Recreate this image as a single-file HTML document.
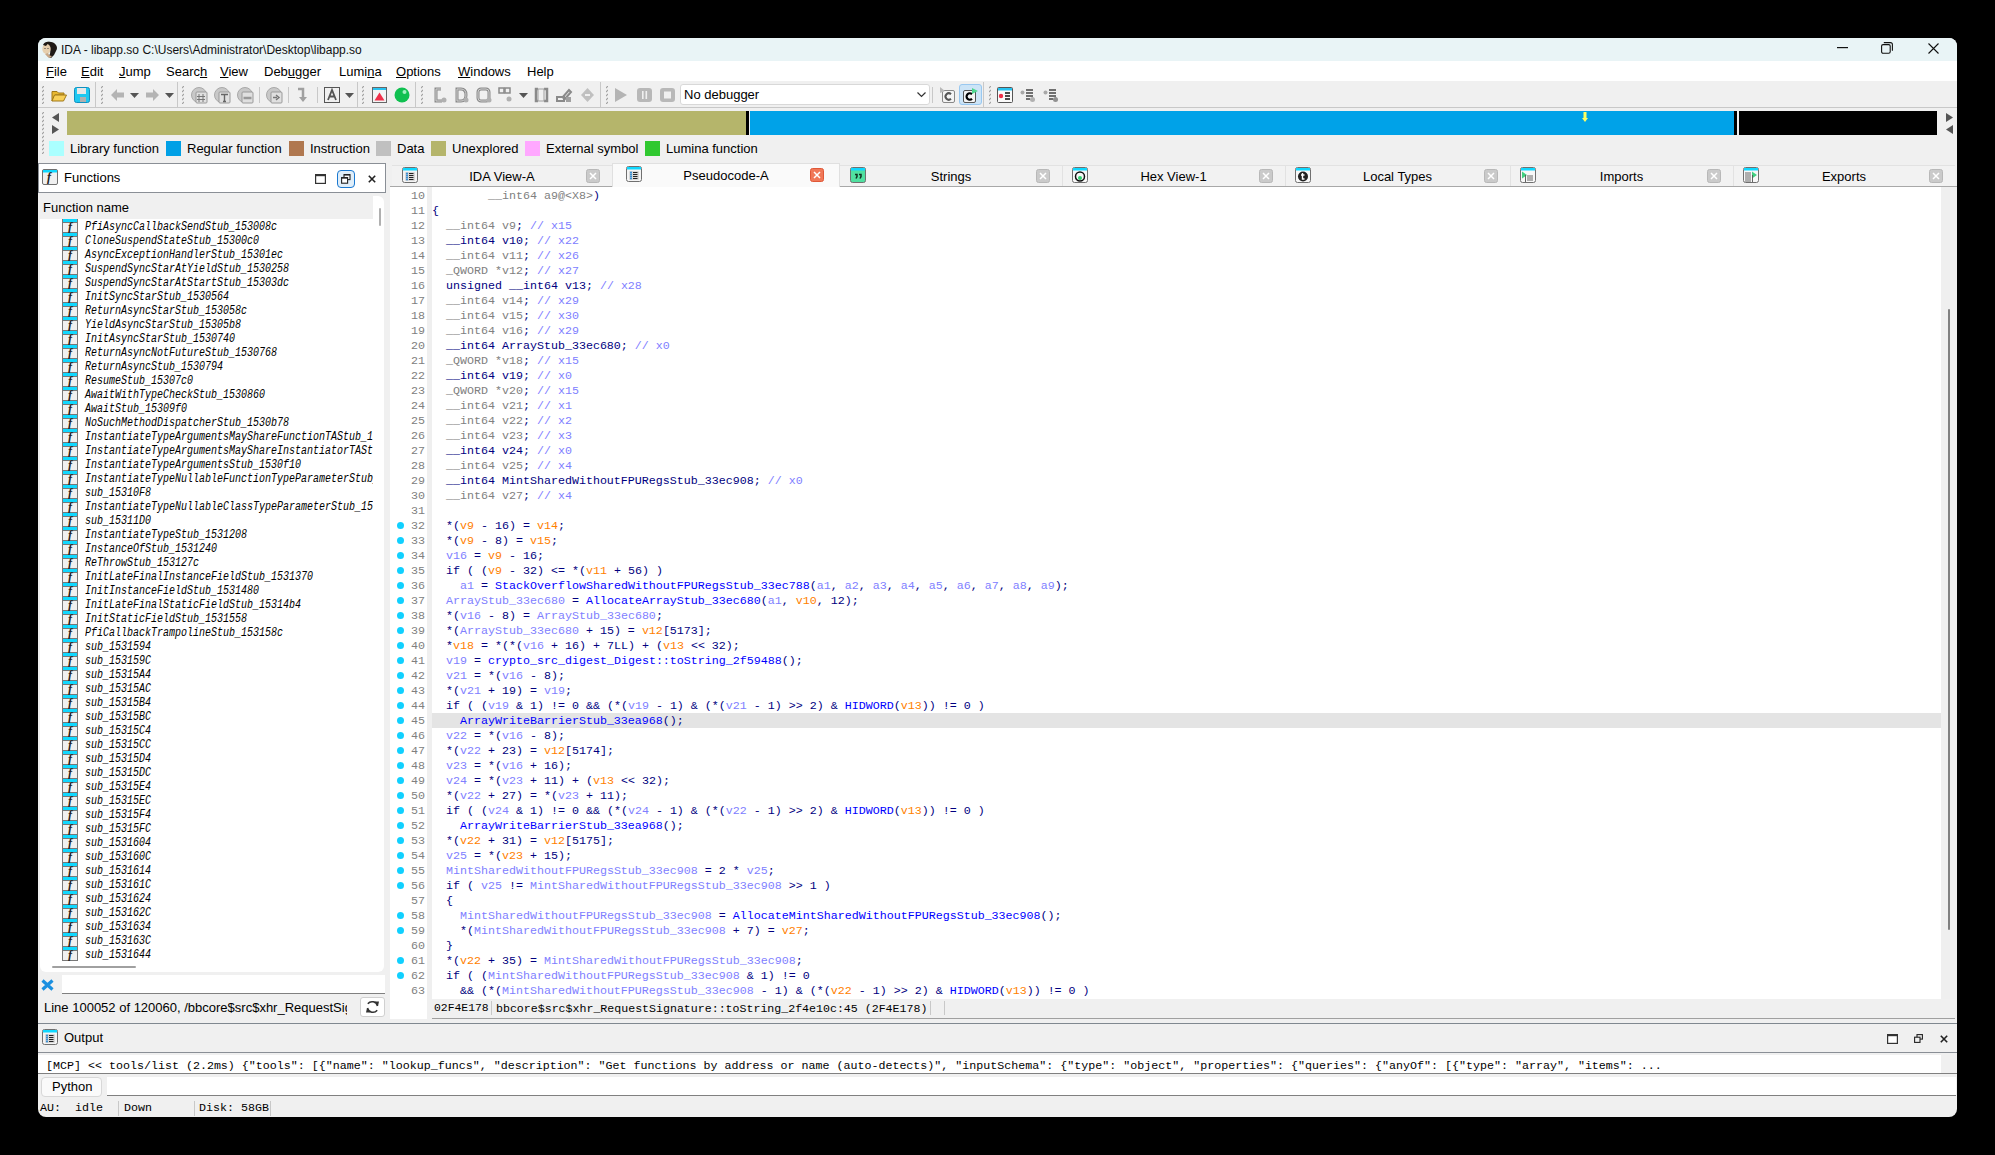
<!DOCTYPE html><html><head><meta charset="utf-8"><style>
*{margin:0;padding:0;box-sizing:border-box}
html,body{width:1995px;height:1155px;background:#000;overflow:hidden;font-family:"Liberation Sans",sans-serif;}
.a{position:absolute}
.win{position:absolute;left:38px;top:38px;width:1919px;height:1079px;background:#f0f0f0;border-radius:8px;overflow:hidden}
.t{position:absolute;white-space:pre;line-height:1}
.mono{font-family:"Liberation Mono",monospace}
i{font-style:normal}.o{color:#ff8000}.p{color:#8080ff}.f{color:#0000ff}.g{color:#808080}.c{color:#8080ff}
.u{text-decoration:underline;text-decoration-thickness:1px;text-underline-offset:1px}
</style></head><body>
<div class="win">
<div class="a" style="left:0px;top:0px;width:1919px;height:23px;background:#e9f4f6"></div>
<svg class="a" style="left:2px;top:3px;" width="18" height="18" viewBox="0 0 18 18"><path d="M7 1q6-1 9 3q2 3 0 6q-1 2-2 4l-3 3l-3-1q3-3 2-7q-1-3-4-3z" fill="#1e1a16"/><ellipse cx="6.5" cy="8" rx="4.2" ry="5" fill="#e6cfae"/><path d="M3 4q2-4 7-3q-3 2-4 4z" fill="#1e1a16"/><path d="M5 13q2 3 5 4l2-2q-3 0-4-3z" fill="#c8a888"/><circle cx="5" cy="7.5" r="0.6" fill="#333"/><circle cx="8" cy="7.5" r="0.6" fill="#333"/></svg>
<svg class="a" style="left:1799px;top:9px;" width="11" height="2" viewBox="0 0 11 2"><rect width="11" height="1.2" fill="#111"/></svg>
<svg class="a" style="left:1843px;top:4px;" width="12" height="12" viewBox="0 0 12 12"><rect x="0.6" y="2.6" width="8.6" height="8.6" rx="1.5" fill="none" stroke="#111" stroke-width="1.1"/><path d="M2.8 0.6H9.4q2 0 2 2V8.8" fill="none" stroke="#111" stroke-width="1.1"/></svg>
<svg class="a" style="left:1890px;top:5px;" width="11" height="11" viewBox="0 0 11 11"><path d="M0.5 0.5L10.5 10.5M10.5 0.5L0.5 10.5" stroke="#111" stroke-width="1.1"/></svg>
<div class="t" style="left:23px;top:6px;font-size:12px;color:#000;color:#111">IDA - libapp.so C:\Users\Administrator\Desktop\libapp.so</div>
<div class="a" style="left:0px;top:23px;width:1919px;height:20px;background:#fff"></div>
<div class="t" style="left:8px;top:27px;font-size:13px;color:#000"><span class="u">F</span>ile</div>
<div class="t" style="left:43px;top:27px;font-size:13px;color:#000"><span class="u">E</span>dit</div>
<div class="t" style="left:81px;top:27px;font-size:13px;color:#000"><span class="u">J</span>ump</div>
<div class="t" style="left:128px;top:27px;font-size:13px;color:#000">Searc<span class="u">h</span></div>
<div class="t" style="left:182px;top:27px;font-size:13px;color:#000"><span class="u">V</span>iew</div>
<div class="t" style="left:226px;top:27px;font-size:13px;color:#000">Deb<span class="u">u</span>gger</div>
<div class="t" style="left:301px;top:27px;font-size:13px;color:#000">Lumi<span class="u">n</span>a</div>
<div class="t" style="left:358px;top:27px;font-size:13px;color:#000"><span class="u">O</span>ptions</div>
<div class="t" style="left:420px;top:27px;font-size:13px;color:#000"><span class="u">W</span>indows</div>
<div class="t" style="left:489px;top:27px;font-size:13px;color:#000">Help</div>
<div class="a" style="left:0px;top:43px;width:1919px;height:26px;background:#f0f0f0"></div>
<div class="a" style="left:0px;top:69px;width:1919px;height:1px;background:#c8c8c8"></div>
<svg class="a" style="left:4px;top:48px;" width="2" height="18" viewBox="0 0 2 18"><path d="M0 2L2 0" stroke="#a0a0a0" stroke-width="1.2"/><path d="M0 6L2 4" stroke="#a0a0a0" stroke-width="1.2"/><path d="M0 10L2 8" stroke="#a0a0a0" stroke-width="1.2"/><path d="M0 14L2 12" stroke="#a0a0a0" stroke-width="1.2"/><path d="M0 18L2 16" stroke="#a0a0a0" stroke-width="1.2"/></svg>
<svg class="a" style="left:13px;top:51px;" width="16" height="13" viewBox="0 0 16 13"><path d="M1 2.5h5l1.5 1.5H13v2H4L1 12Z" fill="#e8b830" stroke="#a07818" stroke-width="1"/><path d="M3.5 6H15.5L12.5 12H1Z" fill="#f8d058" stroke="#a07818" stroke-width="1"/></svg>
<svg class="a" style="left:36px;top:49px;" width="16" height="16" viewBox="0 0 16 16"><rect x="0.5" y="0.5" width="15" height="15" rx="2" fill="#1ec8f0" stroke="#1090c0"/><rect x="3" y="1" width="9" height="6" fill="#e8e8e8"/><rect x="6" y="10" width="6" height="5" fill="#b0b0b0"/></svg>
<div class="a" style="left:57px;top:44px;width:1px;height:25px;background:#c8c8c8"></div>
<svg class="a" style="left:63px;top:48px;" width="2" height="18" viewBox="0 0 2 18"><path d="M0 2L2 0" stroke="#a0a0a0" stroke-width="1.2"/><path d="M0 6L2 4" stroke="#a0a0a0" stroke-width="1.2"/><path d="M0 10L2 8" stroke="#a0a0a0" stroke-width="1.2"/><path d="M0 14L2 12" stroke="#a0a0a0" stroke-width="1.2"/><path d="M0 18L2 16" stroke="#a0a0a0" stroke-width="1.2"/></svg>
<svg class="a" style="left:73px;top:50px;" width="14" height="14" viewBox="0 0 14 14"><path d="M0 7L6 1V4.5H13V9.5H6V13Z" fill="#b4b4b4"/></svg>
<svg class="a" style="left:92px;top:55px;" width="9" height="5" viewBox="0 0 9 5"><path d="M0 0H9L4.5 5Z" fill="#555"/></svg>
<svg class="a" style="left:107px;top:50px;" width="14" height="14" viewBox="0 0 14 14"><path d="M14 7L8 1V4.5H1V9.5H8V13Z" fill="#b4b4b4"/></svg>
<svg class="a" style="left:127px;top:55px;" width="9" height="5" viewBox="0 0 9 5"><path d="M0 0H9L4.5 5Z" fill="#555"/></svg>
<div class="a" style="left:139px;top:44px;width:1px;height:25px;background:#c8c8c8"></div>
<svg class="a" style="left:144px;top:48px;" width="2" height="18" viewBox="0 0 2 18"><path d="M0 2L2 0" stroke="#a0a0a0" stroke-width="1.2"/><path d="M0 6L2 4" stroke="#a0a0a0" stroke-width="1.2"/><path d="M0 10L2 8" stroke="#a0a0a0" stroke-width="1.2"/><path d="M0 14L2 12" stroke="#a0a0a0" stroke-width="1.2"/><path d="M0 18L2 16" stroke="#a0a0a0" stroke-width="1.2"/></svg>
<svg class="a" style="left:153px;top:49px;" width="17" height="17" viewBox="0 0 17 17"><circle cx="8" cy="8" r="7.5" fill="#c8c8c8" stroke="#a8a8a8"/><rect x="5" y="5" width="11" height="11" rx="1" fill="#e0e0e0" stroke="#9a9a9a"/><path d="M8 7v8M12 7v8M6 9.5h8M6 12.5h8" stroke="#777" stroke-width="1"/></svg>
<svg class="a" style="left:176px;top:49px;" width="17" height="17" viewBox="0 0 17 17"><circle cx="8" cy="8" r="7.5" fill="#c8c8c8" stroke="#a8a8a8"/><rect x="5" y="5" width="11" height="11" rx="1" fill="#e0e0e0" stroke="#9a9a9a"/><path d="M7 7.5h7M10.5 7.5v7M9 14.5h3" stroke="#666" stroke-width="1.4"/></svg>
<svg class="a" style="left:199px;top:49px;" width="17" height="17" viewBox="0 0 17 17"><circle cx="8" cy="8" r="7.5" fill="#c8c8c8" stroke="#a8a8a8"/><rect x="5" y="5" width="11" height="11" rx="1" fill="#e0e0e0" stroke="#9a9a9a"/><path d="M6.5 11h8" stroke="#999" stroke-width="2.5"/></svg>
<div class="a" style="left:221px;top:49px;width:1px;height:16px;background:#c8c8c8"></div>
<svg class="a" style="left:228px;top:49px;" width="17" height="17" viewBox="0 0 17 17"><circle cx="8" cy="8" r="7.5" fill="#c8c8c8" stroke="#a8a8a8"/><rect x="5" y="5" width="11" height="11" rx="1" fill="#e0e0e0" stroke="#9a9a9a"/><path d="M7 10.5h4M10 8l3 2.5-3 2.5" stroke="#777" stroke-width="1.4" fill="none"/></svg>
<div class="a" style="left:250px;top:49px;width:1px;height:16px;background:#c8c8c8"></div>
<svg class="a" style="left:259px;top:49px;" width="13" height="17" viewBox="0 0 13 17"><path d="M1 2h5v10" stroke="#a0a0a0" stroke-width="2.5" fill="none"/><path d="M2 10h8l-4 5Z" fill="#a0a0a0"/></svg>
<div class="a" style="left:279px;top:49px;width:1px;height:16px;background:#c8c8c8"></div>
<svg class="a" style="left:286px;top:49px;" width="16" height="16" viewBox="0 0 16 16"><rect x="0.5" y="0.5" width="15" height="15" fill="#f0f0f0" stroke="#555"/><path d="M4 13L8 3L12 13M5.5 9.5h5" stroke="#555" stroke-width="1.8" fill="none"/></svg>
<svg class="a" style="left:307px;top:55px;" width="9" height="5" viewBox="0 0 9 5"><path d="M0 0H9L4.5 5Z" fill="#555"/></svg>
<div class="a" style="left:319px;top:44px;width:1px;height:25px;background:#c8c8c8"></div>
<svg class="a" style="left:324px;top:48px;" width="2" height="18" viewBox="0 0 2 18"><path d="M0 2L2 0" stroke="#a0a0a0" stroke-width="1.2"/><path d="M0 6L2 4" stroke="#a0a0a0" stroke-width="1.2"/><path d="M0 10L2 8" stroke="#a0a0a0" stroke-width="1.2"/><path d="M0 14L2 12" stroke="#a0a0a0" stroke-width="1.2"/><path d="M0 18L2 16" stroke="#a0a0a0" stroke-width="1.2"/></svg>
<svg class="a" style="left:334px;top:49px;" width="15" height="16" viewBox="0 0 15 16"><rect x="0.5" y="0.5" width="14" height="15" fill="#f4f4f4" stroke="#666"/><rect x="1" y="1" width="13" height="2" fill="#29c3f0"/><path d="M2.5 13.5L7.5 5.5L12.5 13.5Z" fill="#f0304a"/></svg>
<svg class="a" style="left:356px;top:49px;" width="16" height="16" viewBox="0 0 16 16"><circle cx="8" cy="8" r="7.5" fill="#10c050"/><circle cx="10.5" cy="5" r="2" fill="#a0f0c0"/></svg>
<div class="a" style="left:377px;top:44px;width:1px;height:25px;background:#c8c8c8"></div>
<svg class="a" style="left:383px;top:48px;" width="2" height="18" viewBox="0 0 2 18"><path d="M0 2L2 0" stroke="#a0a0a0" stroke-width="1.2"/><path d="M0 6L2 4" stroke="#a0a0a0" stroke-width="1.2"/><path d="M0 10L2 8" stroke="#a0a0a0" stroke-width="1.2"/><path d="M0 14L2 12" stroke="#a0a0a0" stroke-width="1.2"/><path d="M0 18L2 16" stroke="#a0a0a0" stroke-width="1.2"/></svg>
<svg class="a" style="left:394px;top:49px;" width="15" height="17" viewBox="0 0 15 17"><path d="M9 2H4v12h6" stroke="#8a8a8a" stroke-width="3" fill="none"/><path d="M9 2H4v12h6" stroke="#d0d0d0" stroke-width="1" fill="none"/><circle cx="12" cy="13" r="2.5" fill="#b0b0b0"/></svg>
<svg class="a" style="left:416px;top:49px;" width="15" height="17" viewBox="0 0 15 17"><path d="M3 2h4q5 0 5 6t-5 6H3Z" stroke="#8a8a8a" stroke-width="3" fill="none"/><path d="M3 2h4q5 0 5 6t-5 6H3Z" stroke="#d0d0d0" stroke-width="1" fill="none"/><circle cx="12" cy="13" r="2.5" fill="#b0b0b0"/></svg>
<svg class="a" style="left:438px;top:49px;" width="16" height="17" viewBox="0 0 16 17"><rect x="2" y="2" width="11" height="12" rx="3" stroke="#8a8a8a" stroke-width="3" fill="none"/><rect x="2" y="2" width="11" height="12" rx="3" stroke="#d0d0d0" stroke-width="1" fill="none"/><circle cx="13" cy="13" r="2.5" fill="#b0b0b0"/></svg>
<svg class="a" style="left:460px;top:49px;" width="15" height="17" viewBox="0 0 15 17"><rect x="1" y="1" width="5" height="5" fill="none" stroke="#8a8a8a" stroke-width="1.5"/><rect x="7" y="1" width="5" height="5" fill="none" stroke="#8a8a8a" stroke-width="1.5"/><circle cx="11" cy="12" r="2.5" fill="#b0b0b0"/></svg>
<svg class="a" style="left:481px;top:55px;" width="9" height="5" viewBox="0 0 9 5"><path d="M0 0H9L4.5 5Z" fill="#555"/></svg>
<svg class="a" style="left:496px;top:49px;" width="16" height="17" viewBox="0 0 16 17"><path d="M4 2H2v12h2M10 2h3v12h-3" stroke="#8a8a8a" stroke-width="2.5" fill="none"/><rect x="4" y="2" width="6" height="12" fill="none" stroke="#a0a0a0"/></svg>
<svg class="a" style="left:518px;top:49px;" width="17" height="17" viewBox="0 0 17 17"><path d="M1 10h7v4H1Z" fill="none" stroke="#8a8a8a" stroke-width="2"/><path d="M6 11L13 3l2 2-7 8" stroke="#8a8a8a" stroke-width="2" fill="none"/><rect x="10" y="10" width="5" height="5" fill="#a0a0a0"/></svg>
<svg class="a" style="left:542px;top:49px;" width="15" height="17" viewBox="0 0 15 17"><path d="M7.5 1L14 8L7.5 15L1 8Z" fill="#c0c0c0"/><rect x="5" y="7" width="5" height="2" fill="#f0f0f0"/></svg>
<div class="a" style="left:562px;top:44px;width:1px;height:25px;background:#c8c8c8"></div>
<svg class="a" style="left:568px;top:48px;" width="2" height="18" viewBox="0 0 2 18"><path d="M0 2L2 0" stroke="#a0a0a0" stroke-width="1.2"/><path d="M0 6L2 4" stroke="#a0a0a0" stroke-width="1.2"/><path d="M0 10L2 8" stroke="#a0a0a0" stroke-width="1.2"/><path d="M0 14L2 12" stroke="#a0a0a0" stroke-width="1.2"/><path d="M0 18L2 16" stroke="#a0a0a0" stroke-width="1.2"/></svg>
<svg class="a" style="left:576px;top:49px;" width="14" height="16" viewBox="0 0 14 16"><path d="M1 1L13 8L1 15Z" fill="#b4b4b4"/></svg>
<svg class="a" style="left:599px;top:49px;" width="15" height="16" viewBox="0 0 15 16"><rect x="0" y="1" width="15" height="14" rx="3" fill="#b8b8b8"/><rect x="5" y="4" width="1.6" height="8" fill="#f0f0f0"/><rect x="8.5" y="4" width="1.6" height="8" fill="#f0f0f0"/></svg>
<svg class="a" style="left:622px;top:49px;" width="15" height="16" viewBox="0 0 15 16"><rect x="0" y="1" width="15" height="14" rx="3" fill="#b8b8b8"/><rect x="4" y="4.5" width="7" height="7" fill="#f0f0f0"/></svg>
<div class="a" style="left:642px;top:46px;width:250px;height:21px;background:#fff;border:1px solid #d8d8d8;border-radius:3px"></div>
<div class="t" style="left:646px;top:50px;font-size:13px;color:#000">No debugger</div>
<svg class="a" style="left:879px;top:54px;" width="9" height="6" viewBox="0 0 9 6"><path d="M0.5 0.5L4.5 4.5L8.5 0.5" stroke="#333" stroke-width="1.2" fill="none"/></svg>
<div class="a" style="left:894px;top:49px;width:1px;height:16px;background:#c8c8c8"></div>
<svg class="a" style="left:901px;top:49px;" width="16" height="16" viewBox="0 0 16 16"><rect x="3.5" y="3.5" width="12" height="12" rx="1.5" fill="#f4f4f4" stroke="#888"/><path d="M1 0L6 4L1 6Z" fill="#b8b8b8"/><path d="M12 7.2A3.2 3.2 0 1 0 12 11.8" stroke="#555" stroke-width="2" fill="none"/></svg>
<div class="a" style="left:921px;top:46px;width:23px;height:21px;background:#cce4f7;border:1px solid #99c8f0;border-radius:3px"></div>
<svg class="a" style="left:924px;top:49px;" width="17" height="17" viewBox="0 0 17 17"><rect x="1.5" y="3.5" width="12" height="12" rx="1.5" fill="#f4f4f4" stroke="#555"/><path d="M10 7.2A3.2 3.2 0 1 0 10 11.8" stroke="#000" stroke-width="2.2" fill="none"/><path d="M10 1L16 4L10 7Z" fill="#50d890"/></svg>
<div class="a" style="left:945px;top:44px;width:1px;height:25px;background:#c8c8c8"></div>
<svg class="a" style="left:951px;top:48px;" width="2" height="18" viewBox="0 0 2 18"><path d="M0 2L2 0" stroke="#a0a0a0" stroke-width="1.2"/><path d="M0 6L2 4" stroke="#a0a0a0" stroke-width="1.2"/><path d="M0 10L2 8" stroke="#a0a0a0" stroke-width="1.2"/><path d="M0 14L2 12" stroke="#a0a0a0" stroke-width="1.2"/><path d="M0 18L2 16" stroke="#a0a0a0" stroke-width="1.2"/></svg>
<svg class="a" style="left:959px;top:49px;" width="16" height="16" viewBox="0 0 16 16"><rect x="0.5" y="0.5" width="15" height="15" rx="1" fill="#fafafa" stroke="#555"/><rect x="1" y="1" width="14" height="2.5" fill="#29c3f0"/><circle cx="4" cy="9" r="2.2" fill="#f0304a"/><path d="M8 6h5M8 9h5M8 12h5" stroke="#111" stroke-width="1.5"/></svg>
<svg class="a" style="left:982px;top:49px;" width="16" height="16" viewBox="0 0 16 16"><circle cx="2.5" cy="5.5" r="2" fill="#a8a8a8"/><path d="M6 3h7M6 6h7M6 9h7M6 12h4" stroke="#444" stroke-width="1.4"/><circle cx="12.5" cy="12.5" r="2.5" fill="#b0b0b0"/></svg>
<svg class="a" style="left:1005px;top:49px;" width="16" height="16" viewBox="0 0 16 16"><circle cx="2.5" cy="5.5" r="2" fill="#a8a8a8"/><path d="M6 3h7M6 6h7M6 9h7M6 12h4" stroke="#444" stroke-width="1.4"/><circle cx="12.5" cy="12.5" r="2.5" fill="#909090"/></svg>
<svg class="a" style="left:4px;top:74px;" width="2" height="42" viewBox="0 0 2 42"><path d="M0 2L2 0" stroke="#a0a0a0" stroke-width="1.2"/><path d="M0 6L2 4" stroke="#a0a0a0" stroke-width="1.2"/><path d="M0 10L2 8" stroke="#a0a0a0" stroke-width="1.2"/><path d="M0 14L2 12" stroke="#a0a0a0" stroke-width="1.2"/><path d="M0 18L2 16" stroke="#a0a0a0" stroke-width="1.2"/><path d="M0 22L2 20" stroke="#a0a0a0" stroke-width="1.2"/><path d="M0 26L2 24" stroke="#a0a0a0" stroke-width="1.2"/><path d="M0 30L2 28" stroke="#a0a0a0" stroke-width="1.2"/><path d="M0 34L2 32" stroke="#a0a0a0" stroke-width="1.2"/><path d="M0 38L2 36" stroke="#a0a0a0" stroke-width="1.2"/><path d="M0 42L2 40" stroke="#a0a0a0" stroke-width="1.2"/></svg>
<svg class="a" style="left:14px;top:75px;" width="7" height="9" viewBox="0 0 7 9"><path d="M7 0V9L0 4.5Z" fill="#555"/></svg>
<svg class="a" style="left:14px;top:87px;" width="7" height="9" viewBox="0 0 7 9"><path d="M0 0V9L7 4.5Z" fill="#555"/></svg>
<div class="a" style="left:29px;top:73px;width:679px;height:24px;background:#b5b56b"></div>
<div class="a" style="left:708px;top:73px;width:3px;height:24px;background:#000"></div>
<div class="a" style="left:712px;top:73px;width:984px;height:24px;background:#00a2e8"></div>
<div class="a" style="left:1696px;top:73px;width:3px;height:24px;background:#000"></div>
<div class="a" style="left:1701px;top:73px;width:198px;height:24px;background:#000"></div>
<svg class="a" style="left:1544px;top:74px;" width="6" height="11" viewBox="0 0 6 11"><rect x="1.5" y="0" width="3" height="7" fill="#ffff60"/><path d="M0 6H6L3 10Z" fill="#ffff60"/></svg>
<svg class="a" style="left:1908px;top:75px;" width="7" height="9" viewBox="0 0 7 9"><path d="M0 0V9L7 4.5Z" fill="#555"/></svg>
<svg class="a" style="left:1908px;top:87px;" width="7" height="9" viewBox="0 0 7 9"><path d="M7 0V9L0 4.5Z" fill="#555"/></svg>
<div class="a" style="left:11px;top:103px;width:15px;height:15px;background:#aaffff"></div>
<div class="t" style="left:32px;top:104px;font-size:13px;color:#000">Library function</div>
<div class="a" style="left:128px;top:103px;width:15px;height:15px;background:#00a0e6"></div>
<div class="t" style="left:149px;top:104px;font-size:13px;color:#000">Regular function</div>
<div class="a" style="left:251px;top:103px;width:15px;height:15px;background:#b07850"></div>
<div class="t" style="left:272px;top:104px;font-size:13px;color:#000">Instruction</div>
<div class="a" style="left:338px;top:103px;width:15px;height:15px;background:#c0c0c0"></div>
<div class="t" style="left:359px;top:104px;font-size:13px;color:#000">Data</div>
<div class="a" style="left:393px;top:103px;width:15px;height:15px;background:#b5b56b"></div>
<div class="t" style="left:414px;top:104px;font-size:13px;color:#000">Unexplored</div>
<div class="a" style="left:487px;top:103px;width:15px;height:15px;background:#ffa8ff"></div>
<div class="t" style="left:508px;top:104px;font-size:13px;color:#000">External symbol</div>
<div class="a" style="left:607px;top:103px;width:15px;height:15px;background:#30c830"></div>
<div class="t" style="left:628px;top:104px;font-size:13px;color:#000">Lumina function</div>
<div class="a" style="left:0px;top:125px;width:348px;height:30px;background:#fff;border:1px solid #8a8f96"></div>
<div class="t" style="left:26px;top:133px;font-size:13px;color:#000">Functions</div>
<svg class="a" style="left:4px;top:131px;" width="16" height="16" viewBox="0 0 16 16"><rect x="0.5" y="0.5" width="15" height="15" rx="1.5" fill="#f0f0f0" stroke="#707070"/><rect x="1" y="1" width="14" height="2.5" fill="#10d8ff"/><text x="5" y="12" font-family="Liberation Serif" font-style="italic" font-weight="bold" font-size="12" fill="#222">f</text></svg>
<svg class="a" style="left:277px;top:136px;" width="11" height="10" viewBox="0 0 11 10"><rect x="0.6" y="0.6" width="9.8" height="8.8" fill="#fff" stroke="#333" stroke-width="1.2"/><rect x="0" y="0" width="11" height="2.2" fill="#333"/></svg>
<div class="a" style="left:299px;top:132px;width:18px;height:18px;background:#e0eef9;border:1px solid #1a78d0;border-radius:4px"></div>
<svg class="a" style="left:303px;top:136px;" width="10" height="10" viewBox="0 0 10 10"><rect x="3" y="0.6" width="6" height="5" fill="#fff" stroke="#222" stroke-width="1.1"/><rect x="3" y="0" width="6" height="1.5" fill="#222"/><rect x="0.6" y="3.6" width="6" height="5.6" fill="#fff" stroke="#222" stroke-width="1.1"/><rect x="0.6" y="3" width="6" height="1.6" fill="#222"/></svg>
<svg class="a" style="left:330px;top:137px;" width="8" height="8" viewBox="0 0 8 8"><path d="M0.8 0.8L7.2 7.2M7.2 0.8L0.8 7.2" stroke="#222" stroke-width="1.6"/></svg>
<div class="a" style="left:2px;top:158px;width:344px;height:776px;background:#fff;border-radius:6px"></div>
<div class="a" style="left:0px;top:155px;width:335px;height:26px;background:#f0f0f0"></div>
<div class="t" style="left:5px;top:163px;font-size:13px;color:#000">Function name</div>
<div class="a" style="left:341px;top:170px;width:2px;height:18px;background:#b0b0b0;border-radius:1px"></div>
<div class="a" style="left:352px;top:125px;width:1567px;height:24px;background:#f0f0f0"></div>
<div class="a" style="left:352px;top:148px;width:1567px;height:1px;background:#a8a8a8"></div>
<div class="a" style="left:354px;top:127px;width:220px;height:21px;background:#f2f2f2;border-top:1px solid #e2e2e2"></div>
<svg class="a" style="left:364px;top:129px;" width="16" height="16" viewBox="0 0 16 16"><rect x="0.5" y="0.5" width="15" height="15" rx="2" fill="#f4f4f4" stroke="#707070"/><rect x="1" y="1" width="14" height="2.5" fill="#10d8ff"/><rect x="3" y="5" width="10" height="9" rx="1" fill="#d8d8d8"/><circle cx="5" cy="6.5" r="0.9" fill="#1a80d0"/><circle cx="5" cy="8.5" r="0.9" fill="#1a80d0"/><circle cx="5" cy="10.5" r="0.9" fill="#1a80d0"/><circle cx="5" cy="12.5" r="0.9" fill="#1a80d0"/><path d="M7 6.5h4.5M7 8.5h4.5M7 10.5h4.5M7 12.5h4.5" stroke="#222" stroke-width="1"/></svg>
<div class="t" style="left:394px;top:132px;width:140px;text-align:center;font-size:13px;color:#000">IDA View-A</div>
<svg class="a" style="left:548px;top:131px;" width="14" height="14" viewBox="0 0 14 14"><rect x="0.5" y="0.5" width="13" height="13" rx="2" fill="#cacaca" stroke="#b8b8b8"/><path d="M4 4L10 10M10 4L4 10" stroke="#fff" stroke-width="1.5"/></svg>
<div class="a" style="left:574px;top:125px;width:228px;height:24px;background:#fafafa;border:1px solid #e0e0e0;border-bottom:none"></div>
<svg class="a" style="left:588px;top:128px;" width="16" height="16" viewBox="0 0 16 16"><rect x="0.5" y="0.5" width="15" height="15" rx="2" fill="#f4f4f4" stroke="#707070"/><rect x="1" y="1" width="14" height="2.5" fill="#10d8ff"/><rect x="3" y="5" width="10" height="9" rx="1" fill="#d8d8d8"/><circle cx="5" cy="6.5" r="0.9" fill="#1a80d0"/><circle cx="5" cy="8.5" r="0.9" fill="#1a80d0"/><circle cx="5" cy="10.5" r="0.9" fill="#1a80d0"/><circle cx="5" cy="12.5" r="0.9" fill="#1a80d0"/><path d="M7 6.5h4.5M7 8.5h4.5M7 10.5h4.5M7 12.5h4.5" stroke="#222" stroke-width="1"/></svg>
<div class="t" style="left:614px;top:131px;width:148px;text-align:center;font-size:13px;color:#000">Pseudocode-A</div>
<svg class="a" style="left:772px;top:130px;" width="14" height="14" viewBox="0 0 14 14"><rect x="0.5" y="0.5" width="13" height="13" rx="2" fill="#f07858" stroke="#e05838"/><path d="M4 4L10 10M10 4L4 10" stroke="#fff" stroke-width="1.5"/></svg>
<div class="a" style="left:802px;top:127px;width:222px;height:21px;background:#f2f2f2;border-top:1px solid #e2e2e2"></div>
<svg class="a" style="left:812px;top:129px;" width="16" height="16" viewBox="0 0 16 16"><rect x="0.5" y="0.5" width="15" height="15" rx="2" fill="#50e0a0" stroke="#707070"/><rect x="1" y="1" width="14" height="2.5" fill="#10d8ff"/><path d="M5 7.5h2v2l-1 2M9 7.5h2v2l-1 2" stroke="#103020" stroke-width="1.5" fill="none"/></svg>
<div class="t" style="left:842px;top:132px;width:142px;text-align:center;font-size:13px;color:#000">Strings</div>
<svg class="a" style="left:998px;top:131px;" width="14" height="14" viewBox="0 0 14 14"><rect x="0.5" y="0.5" width="13" height="13" rx="2" fill="#cacaca" stroke="#b8b8b8"/><path d="M4 4L10 10M10 4L4 10" stroke="#fff" stroke-width="1.5"/></svg>
<div class="a" style="left:1024px;top:127px;width:223px;height:21px;background:#f2f2f2;border-top:1px solid #e2e2e2"></div>
<div class="a" style="left:1024px;top:128px;width:1px;height:20px;background:#e2e2e2"></div>
<svg class="a" style="left:1034px;top:129px;" width="16" height="16" viewBox="0 0 16 16"><rect x="0.5" y="0.5" width="15" height="15" rx="2" fill="#f8f8f8" stroke="#707070"/><rect x="1" y="1" width="14" height="2.5" fill="#10d8ff"/><circle cx="8" cy="9.5" r="4.5" fill="none" stroke="#111" stroke-width="1.5"/><circle cx="8" cy="11" r="2" fill="#30d070"/></svg>
<div class="t" style="left:1064px;top:132px;width:143px;text-align:center;font-size:13px;color:#000">Hex View-1</div>
<svg class="a" style="left:1221px;top:131px;" width="14" height="14" viewBox="0 0 14 14"><rect x="0.5" y="0.5" width="13" height="13" rx="2" fill="#cacaca" stroke="#b8b8b8"/><path d="M4 4L10 10M10 4L4 10" stroke="#fff" stroke-width="1.5"/></svg>
<div class="a" style="left:1247px;top:127px;width:225px;height:21px;background:#f2f2f2;border-top:1px solid #e2e2e2"></div>
<div class="a" style="left:1247px;top:128px;width:1px;height:20px;background:#e2e2e2"></div>
<svg class="a" style="left:1257px;top:129px;" width="16" height="16" viewBox="0 0 16 16"><rect x="0.5" y="0.5" width="15" height="15" rx="2" fill="#f8f8f8" stroke="#707070"/><rect x="1" y="1" width="14" height="2.5" fill="#10d8ff"/><circle cx="8" cy="9.5" r="5" fill="#222"/><path d="M7.5 6v6h2M6 8h3.5" stroke="#fff" stroke-width="1.4" fill="none"/></svg>
<div class="t" style="left:1287px;top:132px;width:145px;text-align:center;font-size:13px;color:#000">Local Types</div>
<svg class="a" style="left:1446px;top:131px;" width="14" height="14" viewBox="0 0 14 14"><rect x="0.5" y="0.5" width="13" height="13" rx="2" fill="#cacaca" stroke="#b8b8b8"/><path d="M4 4L10 10M10 4L4 10" stroke="#fff" stroke-width="1.5"/></svg>
<div class="a" style="left:1472px;top:127px;width:223px;height:21px;background:#f2f2f2;border-top:1px solid #e2e2e2"></div>
<div class="a" style="left:1472px;top:128px;width:1px;height:20px;background:#e2e2e2"></div>
<svg class="a" style="left:1482px;top:129px;" width="16" height="16" viewBox="0 0 16 16"><rect x="0.5" y="0.5" width="15" height="15" rx="2" fill="#f8f8f8" stroke="#707070"/><rect x="1" y="1" width="14" height="2.5" fill="#10d8ff"/><path d="M2 4.5L7 8L2 11.5Z" fill="#40d080"/><path d="M7 9h6M7 11h6M7 13h6M5 13h1" stroke="#555" stroke-width="0.9"/><path d="M5.5 8v7" stroke="#555" stroke-width="0.9"/></svg>
<div class="t" style="left:1512px;top:132px;width:143px;text-align:center;font-size:13px;color:#000">Imports</div>
<svg class="a" style="left:1669px;top:131px;" width="14" height="14" viewBox="0 0 14 14"><rect x="0.5" y="0.5" width="13" height="13" rx="2" fill="#cacaca" stroke="#b8b8b8"/><path d="M4 4L10 10M10 4L4 10" stroke="#fff" stroke-width="1.5"/></svg>
<div class="a" style="left:1695px;top:127px;width:222px;height:21px;background:#f2f2f2;border-top:1px solid #e2e2e2"></div>
<div class="a" style="left:1695px;top:128px;width:1px;height:20px;background:#e2e2e2"></div>
<svg class="a" style="left:1705px;top:129px;" width="16" height="16" viewBox="0 0 16 16"><rect x="0.5" y="0.5" width="15" height="15" rx="2" fill="#f8f8f8" stroke="#707070"/><rect x="1" y="1" width="14" height="2.5" fill="#10d8ff"/><path d="M9 4.5L14 8L9 11.5Z" fill="#40d080"/><path d="M2 6h6M2 8h6M2 10h6M2 12h6M2 14h6" stroke="#555" stroke-width="0.9"/><path d="M9.5 8v7" stroke="#555" stroke-width="0.9"/></svg>
<div class="t" style="left:1735px;top:132px;width:142px;text-align:center;font-size:13px;color:#000">Exports</div>
<svg class="a" style="left:1891px;top:131px;" width="14" height="14" viewBox="0 0 14 14"><rect x="0.5" y="0.5" width="13" height="13" rx="2" fill="#cacaca" stroke="#b8b8b8"/><path d="M4 4L10 10M10 4L4 10" stroke="#fff" stroke-width="1.5"/></svg>
<div class="a" style="left:352px;top:149px;width:1565px;height:813px;background:#fff"></div>
<div class="a" style="left:389px;top:149px;width:5px;height:813px;background:#efefef"></div>
<div class="a" style="left:1903px;top:149px;width:16px;height:832px;background:#efefef"></div>
<div class="a" style="left:1910px;top:271px;width:2px;height:621px;background:#808080;border-radius:1px"></div>
<div class="t" style="left:394px;top:151px;font-family:'Liberation Mono',monospace;font-size:11.67px;line-height:15px;color:#000080">        <i class="g">__int64 a9@&lt;X8&gt;</i>)</div>
<div class="t" style="left:352px;top:151px;font-family:'Liberation Mono',monospace;font-size:11.67px;line-height:15px;color:#808080;width:35px;text-align:right">  10</div>
<div class="t" style="left:394px;top:166px;font-family:'Liberation Mono',monospace;font-size:11.67px;line-height:15px;color:#000080">{</div>
<div class="t" style="left:352px;top:166px;font-family:'Liberation Mono',monospace;font-size:11.67px;line-height:15px;color:#808080;width:35px;text-align:right">  11</div>
<div class="t" style="left:394px;top:181px;font-family:'Liberation Mono',monospace;font-size:11.67px;line-height:15px;color:#000080">  <i class="g">__int64 v9</i>; <i class="c">// x15</i></div>
<div class="t" style="left:352px;top:181px;font-family:'Liberation Mono',monospace;font-size:11.67px;line-height:15px;color:#808080;width:35px;text-align:right">  12</div>
<div class="t" style="left:394px;top:196px;font-family:'Liberation Mono',monospace;font-size:11.67px;line-height:15px;color:#000080">  __int64 v10; <i class="c">// x22</i></div>
<div class="t" style="left:352px;top:196px;font-family:'Liberation Mono',monospace;font-size:11.67px;line-height:15px;color:#808080;width:35px;text-align:right">  13</div>
<div class="t" style="left:394px;top:211px;font-family:'Liberation Mono',monospace;font-size:11.67px;line-height:15px;color:#000080">  <i class="g">__int64 v11</i>; <i class="c">// x26</i></div>
<div class="t" style="left:352px;top:211px;font-family:'Liberation Mono',monospace;font-size:11.67px;line-height:15px;color:#808080;width:35px;text-align:right">  14</div>
<div class="t" style="left:394px;top:226px;font-family:'Liberation Mono',monospace;font-size:11.67px;line-height:15px;color:#000080">  <i class="g">_QWORD *v12</i>; <i class="c">// x27</i></div>
<div class="t" style="left:352px;top:226px;font-family:'Liberation Mono',monospace;font-size:11.67px;line-height:15px;color:#808080;width:35px;text-align:right">  15</div>
<div class="t" style="left:394px;top:241px;font-family:'Liberation Mono',monospace;font-size:11.67px;line-height:15px;color:#000080">  unsigned __int64 v13; <i class="c">// x28</i></div>
<div class="t" style="left:352px;top:241px;font-family:'Liberation Mono',monospace;font-size:11.67px;line-height:15px;color:#808080;width:35px;text-align:right">  16</div>
<div class="t" style="left:394px;top:256px;font-family:'Liberation Mono',monospace;font-size:11.67px;line-height:15px;color:#000080">  <i class="g">__int64 v14</i>; <i class="c">// x29</i></div>
<div class="t" style="left:352px;top:256px;font-family:'Liberation Mono',monospace;font-size:11.67px;line-height:15px;color:#808080;width:35px;text-align:right">  17</div>
<div class="t" style="left:394px;top:271px;font-family:'Liberation Mono',monospace;font-size:11.67px;line-height:15px;color:#000080">  <i class="g">__int64 v15</i>; <i class="c">// x30</i></div>
<div class="t" style="left:352px;top:271px;font-family:'Liberation Mono',monospace;font-size:11.67px;line-height:15px;color:#808080;width:35px;text-align:right">  18</div>
<div class="t" style="left:394px;top:286px;font-family:'Liberation Mono',monospace;font-size:11.67px;line-height:15px;color:#000080">  <i class="g">__int64 v16</i>; <i class="c">// x29</i></div>
<div class="t" style="left:352px;top:286px;font-family:'Liberation Mono',monospace;font-size:11.67px;line-height:15px;color:#808080;width:35px;text-align:right">  19</div>
<div class="t" style="left:394px;top:301px;font-family:'Liberation Mono',monospace;font-size:11.67px;line-height:15px;color:#000080">  __int64 ArrayStub_33ec680; <i class="c">// x0</i></div>
<div class="t" style="left:352px;top:301px;font-family:'Liberation Mono',monospace;font-size:11.67px;line-height:15px;color:#808080;width:35px;text-align:right">  20</div>
<div class="t" style="left:394px;top:316px;font-family:'Liberation Mono',monospace;font-size:11.67px;line-height:15px;color:#000080">  <i class="g">_QWORD *v18</i>; <i class="c">// x15</i></div>
<div class="t" style="left:352px;top:316px;font-family:'Liberation Mono',monospace;font-size:11.67px;line-height:15px;color:#808080;width:35px;text-align:right">  21</div>
<div class="t" style="left:394px;top:331px;font-family:'Liberation Mono',monospace;font-size:11.67px;line-height:15px;color:#000080">  __int64 v19; <i class="c">// x0</i></div>
<div class="t" style="left:352px;top:331px;font-family:'Liberation Mono',monospace;font-size:11.67px;line-height:15px;color:#808080;width:35px;text-align:right">  22</div>
<div class="t" style="left:394px;top:346px;font-family:'Liberation Mono',monospace;font-size:11.67px;line-height:15px;color:#000080">  <i class="g">_QWORD *v20</i>; <i class="c">// x15</i></div>
<div class="t" style="left:352px;top:346px;font-family:'Liberation Mono',monospace;font-size:11.67px;line-height:15px;color:#808080;width:35px;text-align:right">  23</div>
<div class="t" style="left:394px;top:361px;font-family:'Liberation Mono',monospace;font-size:11.67px;line-height:15px;color:#000080">  <i class="g">__int64 v21</i>; <i class="c">// x1</i></div>
<div class="t" style="left:352px;top:361px;font-family:'Liberation Mono',monospace;font-size:11.67px;line-height:15px;color:#808080;width:35px;text-align:right">  24</div>
<div class="t" style="left:394px;top:376px;font-family:'Liberation Mono',monospace;font-size:11.67px;line-height:15px;color:#000080">  <i class="g">__int64 v22</i>; <i class="c">// x2</i></div>
<div class="t" style="left:352px;top:376px;font-family:'Liberation Mono',monospace;font-size:11.67px;line-height:15px;color:#808080;width:35px;text-align:right">  25</div>
<div class="t" style="left:394px;top:391px;font-family:'Liberation Mono',monospace;font-size:11.67px;line-height:15px;color:#000080">  <i class="g">__int64 v23</i>; <i class="c">// x3</i></div>
<div class="t" style="left:352px;top:391px;font-family:'Liberation Mono',monospace;font-size:11.67px;line-height:15px;color:#808080;width:35px;text-align:right">  26</div>
<div class="t" style="left:394px;top:406px;font-family:'Liberation Mono',monospace;font-size:11.67px;line-height:15px;color:#000080">  __int64 v24; <i class="c">// x0</i></div>
<div class="t" style="left:352px;top:406px;font-family:'Liberation Mono',monospace;font-size:11.67px;line-height:15px;color:#808080;width:35px;text-align:right">  27</div>
<div class="t" style="left:394px;top:421px;font-family:'Liberation Mono',monospace;font-size:11.67px;line-height:15px;color:#000080">  <i class="g">__int64 v25</i>; <i class="c">// x4</i></div>
<div class="t" style="left:352px;top:421px;font-family:'Liberation Mono',monospace;font-size:11.67px;line-height:15px;color:#808080;width:35px;text-align:right">  28</div>
<div class="t" style="left:394px;top:436px;font-family:'Liberation Mono',monospace;font-size:11.67px;line-height:15px;color:#000080">  __int64 MintSharedWithoutFPURegsStub_33ec908; <i class="c">// x0</i></div>
<div class="t" style="left:352px;top:436px;font-family:'Liberation Mono',monospace;font-size:11.67px;line-height:15px;color:#808080;width:35px;text-align:right">  29</div>
<div class="t" style="left:394px;top:451px;font-family:'Liberation Mono',monospace;font-size:11.67px;line-height:15px;color:#000080">  <i class="g">__int64 v27</i>; <i class="c">// x4</i></div>
<div class="t" style="left:352px;top:451px;font-family:'Liberation Mono',monospace;font-size:11.67px;line-height:15px;color:#808080;width:35px;text-align:right">  30</div>
<div class="t" style="left:394px;top:466px;font-family:'Liberation Mono',monospace;font-size:11.67px;line-height:15px;color:#000080"></div>
<div class="t" style="left:352px;top:466px;font-family:'Liberation Mono',monospace;font-size:11.67px;line-height:15px;color:#808080;width:35px;text-align:right">  31</div>
<div class="t" style="left:394px;top:481px;font-family:'Liberation Mono',monospace;font-size:11.67px;line-height:15px;color:#000080">  *(<i class="o">v9</i> - 16) = <i class="o">v14</i>;</div>
<div class="t" style="left:352px;top:481px;font-family:'Liberation Mono',monospace;font-size:11.67px;line-height:15px;color:#808080;width:35px;text-align:right">  32</div>
<div class="a" style="left:359px;top:484px;width:7px;height:7px;background:#10d0ff;border-radius:50%"></div>
<div class="t" style="left:394px;top:496px;font-family:'Liberation Mono',monospace;font-size:11.67px;line-height:15px;color:#000080">  *(<i class="o">v9</i> - 8) = <i class="o">v15</i>;</div>
<div class="t" style="left:352px;top:496px;font-family:'Liberation Mono',monospace;font-size:11.67px;line-height:15px;color:#808080;width:35px;text-align:right">  33</div>
<div class="a" style="left:359px;top:499px;width:7px;height:7px;background:#10d0ff;border-radius:50%"></div>
<div class="t" style="left:394px;top:511px;font-family:'Liberation Mono',monospace;font-size:11.67px;line-height:15px;color:#000080">  <i class="p">v16</i> = <i class="o">v9</i> - 16;</div>
<div class="t" style="left:352px;top:511px;font-family:'Liberation Mono',monospace;font-size:11.67px;line-height:15px;color:#808080;width:35px;text-align:right">  34</div>
<div class="a" style="left:359px;top:514px;width:7px;height:7px;background:#10d0ff;border-radius:50%"></div>
<div class="t" style="left:394px;top:526px;font-family:'Liberation Mono',monospace;font-size:11.67px;line-height:15px;color:#000080">  if ( (<i class="o">v9</i> - 32) &lt;= *(<i class="o">v11</i> + 56) )</div>
<div class="t" style="left:352px;top:526px;font-family:'Liberation Mono',monospace;font-size:11.67px;line-height:15px;color:#808080;width:35px;text-align:right">  35</div>
<div class="a" style="left:359px;top:529px;width:7px;height:7px;background:#10d0ff;border-radius:50%"></div>
<div class="t" style="left:394px;top:541px;font-family:'Liberation Mono',monospace;font-size:11.67px;line-height:15px;color:#000080">    <i class="p">a1</i> = <i class="f">StackOverflowSharedWithoutFPURegsStub_33ec788</i>(<i class="p">a1</i>, <i class="p">a2</i>, <i class="p">a3</i>, <i class="p">a4</i>, <i class="p">a5</i>, <i class="p">a6</i>, <i class="p">a7</i>, <i class="p">a8</i>, <i class="p">a9</i>);</div>
<div class="t" style="left:352px;top:541px;font-family:'Liberation Mono',monospace;font-size:11.67px;line-height:15px;color:#808080;width:35px;text-align:right">  36</div>
<div class="a" style="left:359px;top:544px;width:7px;height:7px;background:#10d0ff;border-radius:50%"></div>
<div class="t" style="left:394px;top:556px;font-family:'Liberation Mono',monospace;font-size:11.67px;line-height:15px;color:#000080">  <i class="p">ArrayStub_33ec680</i> = <i class="f">AllocateArrayStub_33ec680</i>(<i class="p">a1</i>, <i class="o">v10</i>, 12);</div>
<div class="t" style="left:352px;top:556px;font-family:'Liberation Mono',monospace;font-size:11.67px;line-height:15px;color:#808080;width:35px;text-align:right">  37</div>
<div class="a" style="left:359px;top:559px;width:7px;height:7px;background:#10d0ff;border-radius:50%"></div>
<div class="t" style="left:394px;top:571px;font-family:'Liberation Mono',monospace;font-size:11.67px;line-height:15px;color:#000080">  *(<i class="p">v16</i> - 8) = <i class="p">ArrayStub_33ec680</i>;</div>
<div class="t" style="left:352px;top:571px;font-family:'Liberation Mono',monospace;font-size:11.67px;line-height:15px;color:#808080;width:35px;text-align:right">  38</div>
<div class="a" style="left:359px;top:574px;width:7px;height:7px;background:#10d0ff;border-radius:50%"></div>
<div class="t" style="left:394px;top:586px;font-family:'Liberation Mono',monospace;font-size:11.67px;line-height:15px;color:#000080">  *(<i class="p">ArrayStub_33ec680</i> + 15) = <i class="o">v12</i>[5173];</div>
<div class="t" style="left:352px;top:586px;font-family:'Liberation Mono',monospace;font-size:11.67px;line-height:15px;color:#808080;width:35px;text-align:right">  39</div>
<div class="a" style="left:359px;top:589px;width:7px;height:7px;background:#10d0ff;border-radius:50%"></div>
<div class="t" style="left:394px;top:601px;font-family:'Liberation Mono',monospace;font-size:11.67px;line-height:15px;color:#000080">  *<i class="o">v18</i> = *(*(<i class="p">v16</i> + 16) + 7LL) + (<i class="o">v13</i> &lt;&lt; 32);</div>
<div class="t" style="left:352px;top:601px;font-family:'Liberation Mono',monospace;font-size:11.67px;line-height:15px;color:#808080;width:35px;text-align:right">  40</div>
<div class="a" style="left:359px;top:604px;width:7px;height:7px;background:#10d0ff;border-radius:50%"></div>
<div class="t" style="left:394px;top:616px;font-family:'Liberation Mono',monospace;font-size:11.67px;line-height:15px;color:#000080">  <i class="p">v19</i> = <i class="f">crypto_src_digest_Digest::toString_2f59488</i>();</div>
<div class="t" style="left:352px;top:616px;font-family:'Liberation Mono',monospace;font-size:11.67px;line-height:15px;color:#808080;width:35px;text-align:right">  41</div>
<div class="a" style="left:359px;top:619px;width:7px;height:7px;background:#10d0ff;border-radius:50%"></div>
<div class="t" style="left:394px;top:631px;font-family:'Liberation Mono',monospace;font-size:11.67px;line-height:15px;color:#000080">  <i class="p">v21</i> = *(<i class="p">v16</i> - 8);</div>
<div class="t" style="left:352px;top:631px;font-family:'Liberation Mono',monospace;font-size:11.67px;line-height:15px;color:#808080;width:35px;text-align:right">  42</div>
<div class="a" style="left:359px;top:634px;width:7px;height:7px;background:#10d0ff;border-radius:50%"></div>
<div class="t" style="left:394px;top:646px;font-family:'Liberation Mono',monospace;font-size:11.67px;line-height:15px;color:#000080">  *(<i class="p">v21</i> + 19) = <i class="p">v19</i>;</div>
<div class="t" style="left:352px;top:646px;font-family:'Liberation Mono',monospace;font-size:11.67px;line-height:15px;color:#808080;width:35px;text-align:right">  43</div>
<div class="a" style="left:359px;top:649px;width:7px;height:7px;background:#10d0ff;border-radius:50%"></div>
<div class="t" style="left:394px;top:661px;font-family:'Liberation Mono',monospace;font-size:11.67px;line-height:15px;color:#000080">  if ( (<i class="p">v19</i> &amp; 1) != 0 &amp;&amp; (*(<i class="p">v19</i> - 1) &amp; (*(<i class="p">v21</i> - 1) &gt;&gt; 2) &amp; <i class="f">HIDWORD</i>(<i class="o">v13</i>)) != 0 )</div>
<div class="t" style="left:352px;top:661px;font-family:'Liberation Mono',monospace;font-size:11.67px;line-height:15px;color:#808080;width:35px;text-align:right">  44</div>
<div class="a" style="left:359px;top:664px;width:7px;height:7px;background:#10d0ff;border-radius:50%"></div>
<div class="a" style="left:394px;top:675px;width:1509px;height:15px;background:#e4e4e4"></div>
<div class="t" style="left:394px;top:676px;font-family:'Liberation Mono',monospace;font-size:11.67px;line-height:15px;color:#000080">    <i class="f">ArrayWriteBarrierStub_33ea968</i>();</div>
<div class="t" style="left:352px;top:676px;font-family:'Liberation Mono',monospace;font-size:11.67px;line-height:15px;color:#808080;width:35px;text-align:right">  45</div>
<div class="a" style="left:359px;top:679px;width:7px;height:7px;background:#10d0ff;border-radius:50%"></div>
<div class="t" style="left:394px;top:691px;font-family:'Liberation Mono',monospace;font-size:11.67px;line-height:15px;color:#000080">  <i class="p">v22</i> = *(<i class="p">v16</i> - 8);</div>
<div class="t" style="left:352px;top:691px;font-family:'Liberation Mono',monospace;font-size:11.67px;line-height:15px;color:#808080;width:35px;text-align:right">  46</div>
<div class="a" style="left:359px;top:694px;width:7px;height:7px;background:#10d0ff;border-radius:50%"></div>
<div class="t" style="left:394px;top:706px;font-family:'Liberation Mono',monospace;font-size:11.67px;line-height:15px;color:#000080">  *(<i class="p">v22</i> + 23) = <i class="o">v12</i>[5174];</div>
<div class="t" style="left:352px;top:706px;font-family:'Liberation Mono',monospace;font-size:11.67px;line-height:15px;color:#808080;width:35px;text-align:right">  47</div>
<div class="a" style="left:359px;top:709px;width:7px;height:7px;background:#10d0ff;border-radius:50%"></div>
<div class="t" style="left:394px;top:721px;font-family:'Liberation Mono',monospace;font-size:11.67px;line-height:15px;color:#000080">  <i class="p">v23</i> = *(<i class="p">v16</i> + 16);</div>
<div class="t" style="left:352px;top:721px;font-family:'Liberation Mono',monospace;font-size:11.67px;line-height:15px;color:#808080;width:35px;text-align:right">  48</div>
<div class="a" style="left:359px;top:724px;width:7px;height:7px;background:#10d0ff;border-radius:50%"></div>
<div class="t" style="left:394px;top:736px;font-family:'Liberation Mono',monospace;font-size:11.67px;line-height:15px;color:#000080">  <i class="p">v24</i> = *(<i class="p">v23</i> + 11) + (<i class="o">v13</i> &lt;&lt; 32);</div>
<div class="t" style="left:352px;top:736px;font-family:'Liberation Mono',monospace;font-size:11.67px;line-height:15px;color:#808080;width:35px;text-align:right">  49</div>
<div class="a" style="left:359px;top:739px;width:7px;height:7px;background:#10d0ff;border-radius:50%"></div>
<div class="t" style="left:394px;top:751px;font-family:'Liberation Mono',monospace;font-size:11.67px;line-height:15px;color:#000080">  *(<i class="p">v22</i> + 27) = *(<i class="p">v23</i> + 11);</div>
<div class="t" style="left:352px;top:751px;font-family:'Liberation Mono',monospace;font-size:11.67px;line-height:15px;color:#808080;width:35px;text-align:right">  50</div>
<div class="a" style="left:359px;top:754px;width:7px;height:7px;background:#10d0ff;border-radius:50%"></div>
<div class="t" style="left:394px;top:766px;font-family:'Liberation Mono',monospace;font-size:11.67px;line-height:15px;color:#000080">  if ( (<i class="p">v24</i> &amp; 1) != 0 &amp;&amp; (*(<i class="p">v24</i> - 1) &amp; (*(<i class="p">v22</i> - 1) &gt;&gt; 2) &amp; <i class="f">HIDWORD</i>(<i class="o">v13</i>)) != 0 )</div>
<div class="t" style="left:352px;top:766px;font-family:'Liberation Mono',monospace;font-size:11.67px;line-height:15px;color:#808080;width:35px;text-align:right">  51</div>
<div class="a" style="left:359px;top:769px;width:7px;height:7px;background:#10d0ff;border-radius:50%"></div>
<div class="t" style="left:394px;top:781px;font-family:'Liberation Mono',monospace;font-size:11.67px;line-height:15px;color:#000080">    <i class="f">ArrayWriteBarrierStub_33ea968</i>();</div>
<div class="t" style="left:352px;top:781px;font-family:'Liberation Mono',monospace;font-size:11.67px;line-height:15px;color:#808080;width:35px;text-align:right">  52</div>
<div class="a" style="left:359px;top:784px;width:7px;height:7px;background:#10d0ff;border-radius:50%"></div>
<div class="t" style="left:394px;top:796px;font-family:'Liberation Mono',monospace;font-size:11.67px;line-height:15px;color:#000080">  *(<i class="o">v22</i> + 31) = <i class="o">v12</i>[5175];</div>
<div class="t" style="left:352px;top:796px;font-family:'Liberation Mono',monospace;font-size:11.67px;line-height:15px;color:#808080;width:35px;text-align:right">  53</div>
<div class="a" style="left:359px;top:799px;width:7px;height:7px;background:#10d0ff;border-radius:50%"></div>
<div class="t" style="left:394px;top:811px;font-family:'Liberation Mono',monospace;font-size:11.67px;line-height:15px;color:#000080">  <i class="p">v25</i> = *(<i class="o">v23</i> + 15);</div>
<div class="t" style="left:352px;top:811px;font-family:'Liberation Mono',monospace;font-size:11.67px;line-height:15px;color:#808080;width:35px;text-align:right">  54</div>
<div class="a" style="left:359px;top:814px;width:7px;height:7px;background:#10d0ff;border-radius:50%"></div>
<div class="t" style="left:394px;top:826px;font-family:'Liberation Mono',monospace;font-size:11.67px;line-height:15px;color:#000080">  <i class="p">MintSharedWithoutFPURegsStub_33ec908</i> = 2 * <i class="p">v25</i>;</div>
<div class="t" style="left:352px;top:826px;font-family:'Liberation Mono',monospace;font-size:11.67px;line-height:15px;color:#808080;width:35px;text-align:right">  55</div>
<div class="a" style="left:359px;top:829px;width:7px;height:7px;background:#10d0ff;border-radius:50%"></div>
<div class="t" style="left:394px;top:841px;font-family:'Liberation Mono',monospace;font-size:11.67px;line-height:15px;color:#000080">  if ( <i class="p">v25</i> != <i class="p">MintSharedWithoutFPURegsStub_33ec908</i> &gt;&gt; 1 )</div>
<div class="t" style="left:352px;top:841px;font-family:'Liberation Mono',monospace;font-size:11.67px;line-height:15px;color:#808080;width:35px;text-align:right">  56</div>
<div class="a" style="left:359px;top:844px;width:7px;height:7px;background:#10d0ff;border-radius:50%"></div>
<div class="t" style="left:394px;top:856px;font-family:'Liberation Mono',monospace;font-size:11.67px;line-height:15px;color:#000080">  {</div>
<div class="t" style="left:352px;top:856px;font-family:'Liberation Mono',monospace;font-size:11.67px;line-height:15px;color:#808080;width:35px;text-align:right">  57</div>
<div class="t" style="left:394px;top:871px;font-family:'Liberation Mono',monospace;font-size:11.67px;line-height:15px;color:#000080">    <i class="p">MintSharedWithoutFPURegsStub_33ec908</i> = <i class="f">AllocateMintSharedWithoutFPURegsStub_33ec908</i>();</div>
<div class="t" style="left:352px;top:871px;font-family:'Liberation Mono',monospace;font-size:11.67px;line-height:15px;color:#808080;width:35px;text-align:right">  58</div>
<div class="a" style="left:359px;top:874px;width:7px;height:7px;background:#10d0ff;border-radius:50%"></div>
<div class="t" style="left:394px;top:886px;font-family:'Liberation Mono',monospace;font-size:11.67px;line-height:15px;color:#000080">    *(<i class="p">MintSharedWithoutFPURegsStub_33ec908</i> + 7) = <i class="o">v27</i>;</div>
<div class="t" style="left:352px;top:886px;font-family:'Liberation Mono',monospace;font-size:11.67px;line-height:15px;color:#808080;width:35px;text-align:right">  59</div>
<div class="a" style="left:359px;top:889px;width:7px;height:7px;background:#10d0ff;border-radius:50%"></div>
<div class="t" style="left:394px;top:901px;font-family:'Liberation Mono',monospace;font-size:11.67px;line-height:15px;color:#000080">  }</div>
<div class="t" style="left:352px;top:901px;font-family:'Liberation Mono',monospace;font-size:11.67px;line-height:15px;color:#808080;width:35px;text-align:right">  60</div>
<div class="t" style="left:394px;top:916px;font-family:'Liberation Mono',monospace;font-size:11.67px;line-height:15px;color:#000080">  *(<i class="o">v22</i> + 35) = <i class="p">MintSharedWithoutFPURegsStub_33ec908</i>;</div>
<div class="t" style="left:352px;top:916px;font-family:'Liberation Mono',monospace;font-size:11.67px;line-height:15px;color:#808080;width:35px;text-align:right">  61</div>
<div class="a" style="left:359px;top:919px;width:7px;height:7px;background:#10d0ff;border-radius:50%"></div>
<div class="t" style="left:394px;top:931px;font-family:'Liberation Mono',monospace;font-size:11.67px;line-height:15px;color:#000080">  if ( (<i class="p">MintSharedWithoutFPURegsStub_33ec908</i> &amp; 1) != 0</div>
<div class="t" style="left:352px;top:931px;font-family:'Liberation Mono',monospace;font-size:11.67px;line-height:15px;color:#808080;width:35px;text-align:right">  62</div>
<div class="a" style="left:359px;top:934px;width:7px;height:7px;background:#10d0ff;border-radius:50%"></div>
<div class="t" style="left:394px;top:946px;font-family:'Liberation Mono',monospace;font-size:11.67px;line-height:15px;color:#000080">    &amp;&amp; (*(<i class="p">MintSharedWithoutFPURegsStub_33ec908</i> - 1) &amp; (*(<i class="o">v22</i> - 1) &gt;&gt; 2) &amp; <i class="f">HIDWORD</i>(<i class="o">v13</i>)) != 0 )</div>
<div class="t" style="left:352px;top:946px;font-family:'Liberation Mono',monospace;font-size:11.67px;line-height:15px;color:#808080;width:35px;text-align:right">  63</div>
<div class="a" style="left:394px;top:961px;width:1523px;height:19px;background:#f0f0f0"></div>
<div class="a" style="left:394px;top:980px;width:1523px;height:1px;background:#a0a0a0"></div>
<div class="a" style="left:352px;top:961px;width:37px;height:20px;background:#fff"></div>
<div class="t" style="left:396px;top:965px;font-family:'Liberation Mono',monospace;font-size:11.4px;color:#000">02F4E178</div>
<div class="a" style="left:453px;top:963px;width:1px;height:14px;background:#c8c8c8"></div>
<div class="t" style="left:458px;top:965px;font-family:'Liberation Mono',monospace;font-size:11.6px;color:#000">bbcore$src$xhr_RequestSignature::toString_2f4e10c:45 (2F4E178)</div>
<div class="a" style="left:892px;top:963px;width:1px;height:14px;background:#c8c8c8"></div>
<div class="a" style="left:906px;top:963px;width:1px;height:14px;background:#c8c8c8"></div>
<div class="a" style="left:2px;top:181px;width:333px;height:742px;overflow:hidden">
<div class="a" style="left:22px;top:0px;width:16px;height:14px;background:linear-gradient(#10d8ff 0 3px,#787878 3px 4px,#f0f0f0 4px 13px,#787878 13px 14px);border-left:1px solid #787878;border-right:1px solid #787878"></div>
<div class="t" style="left:28px;top:2px;font-family:'Liberation Serif',serif;font-style:italic;font-weight:bold;font-size:12px;color:#222">f</div>
<div class="t" style="left:45px;top:2px;font-family:'Liberation Mono',monospace;font-style:italic;font-size:12px;color:#000;transform:scaleX(0.8333);transform-origin:0 0;">PfiAsyncCallbackSendStub_153008c</div>
<div class="a" style="left:22px;top:14px;width:16px;height:14px;background:linear-gradient(#10d8ff 0 3px,#787878 3px 4px,#f0f0f0 4px 13px,#787878 13px 14px);border-left:1px solid #787878;border-right:1px solid #787878"></div>
<div class="t" style="left:28px;top:16px;font-family:'Liberation Serif',serif;font-style:italic;font-weight:bold;font-size:12px;color:#222">f</div>
<div class="t" style="left:45px;top:16px;font-family:'Liberation Mono',monospace;font-style:italic;font-size:12px;color:#000;transform:scaleX(0.8333);transform-origin:0 0;">CloneSuspendStateStub_15300c0</div>
<div class="a" style="left:22px;top:28px;width:16px;height:14px;background:linear-gradient(#10d8ff 0 3px,#787878 3px 4px,#f0f0f0 4px 13px,#787878 13px 14px);border-left:1px solid #787878;border-right:1px solid #787878"></div>
<div class="t" style="left:28px;top:30px;font-family:'Liberation Serif',serif;font-style:italic;font-weight:bold;font-size:12px;color:#222">f</div>
<div class="t" style="left:45px;top:30px;font-family:'Liberation Mono',monospace;font-style:italic;font-size:12px;color:#000;transform:scaleX(0.8333);transform-origin:0 0;">AsyncExceptionHandlerStub_15301ec</div>
<div class="a" style="left:22px;top:42px;width:16px;height:14px;background:linear-gradient(#10d8ff 0 3px,#787878 3px 4px,#f0f0f0 4px 13px,#787878 13px 14px);border-left:1px solid #787878;border-right:1px solid #787878"></div>
<div class="t" style="left:28px;top:44px;font-family:'Liberation Serif',serif;font-style:italic;font-weight:bold;font-size:12px;color:#222">f</div>
<div class="t" style="left:45px;top:44px;font-family:'Liberation Mono',monospace;font-style:italic;font-size:12px;color:#000;transform:scaleX(0.8333);transform-origin:0 0;">SuspendSyncStarAtYieldStub_1530258</div>
<div class="a" style="left:22px;top:56px;width:16px;height:14px;background:linear-gradient(#10d8ff 0 3px,#787878 3px 4px,#f0f0f0 4px 13px,#787878 13px 14px);border-left:1px solid #787878;border-right:1px solid #787878"></div>
<div class="t" style="left:28px;top:58px;font-family:'Liberation Serif',serif;font-style:italic;font-weight:bold;font-size:12px;color:#222">f</div>
<div class="t" style="left:45px;top:58px;font-family:'Liberation Mono',monospace;font-style:italic;font-size:12px;color:#000;transform:scaleX(0.8333);transform-origin:0 0;">SuspendSyncStarAtStartStub_15303dc</div>
<div class="a" style="left:22px;top:70px;width:16px;height:14px;background:linear-gradient(#10d8ff 0 3px,#787878 3px 4px,#f0f0f0 4px 13px,#787878 13px 14px);border-left:1px solid #787878;border-right:1px solid #787878"></div>
<div class="t" style="left:28px;top:72px;font-family:'Liberation Serif',serif;font-style:italic;font-weight:bold;font-size:12px;color:#222">f</div>
<div class="t" style="left:45px;top:72px;font-family:'Liberation Mono',monospace;font-style:italic;font-size:12px;color:#000;transform:scaleX(0.8333);transform-origin:0 0;">InitSyncStarStub_1530564</div>
<div class="a" style="left:22px;top:84px;width:16px;height:14px;background:linear-gradient(#10d8ff 0 3px,#787878 3px 4px,#f0f0f0 4px 13px,#787878 13px 14px);border-left:1px solid #787878;border-right:1px solid #787878"></div>
<div class="t" style="left:28px;top:86px;font-family:'Liberation Serif',serif;font-style:italic;font-weight:bold;font-size:12px;color:#222">f</div>
<div class="t" style="left:45px;top:86px;font-family:'Liberation Mono',monospace;font-style:italic;font-size:12px;color:#000;transform:scaleX(0.8333);transform-origin:0 0;">ReturnAsyncStarStub_153058c</div>
<div class="a" style="left:22px;top:98px;width:16px;height:14px;background:linear-gradient(#10d8ff 0 3px,#787878 3px 4px,#f0f0f0 4px 13px,#787878 13px 14px);border-left:1px solid #787878;border-right:1px solid #787878"></div>
<div class="t" style="left:28px;top:100px;font-family:'Liberation Serif',serif;font-style:italic;font-weight:bold;font-size:12px;color:#222">f</div>
<div class="t" style="left:45px;top:100px;font-family:'Liberation Mono',monospace;font-style:italic;font-size:12px;color:#000;transform:scaleX(0.8333);transform-origin:0 0;">YieldAsyncStarStub_15305b8</div>
<div class="a" style="left:22px;top:112px;width:16px;height:14px;background:linear-gradient(#10d8ff 0 3px,#787878 3px 4px,#f0f0f0 4px 13px,#787878 13px 14px);border-left:1px solid #787878;border-right:1px solid #787878"></div>
<div class="t" style="left:28px;top:114px;font-family:'Liberation Serif',serif;font-style:italic;font-weight:bold;font-size:12px;color:#222">f</div>
<div class="t" style="left:45px;top:114px;font-family:'Liberation Mono',monospace;font-style:italic;font-size:12px;color:#000;transform:scaleX(0.8333);transform-origin:0 0;">InitAsyncStarStub_1530740</div>
<div class="a" style="left:22px;top:126px;width:16px;height:14px;background:linear-gradient(#10d8ff 0 3px,#787878 3px 4px,#f0f0f0 4px 13px,#787878 13px 14px);border-left:1px solid #787878;border-right:1px solid #787878"></div>
<div class="t" style="left:28px;top:128px;font-family:'Liberation Serif',serif;font-style:italic;font-weight:bold;font-size:12px;color:#222">f</div>
<div class="t" style="left:45px;top:128px;font-family:'Liberation Mono',monospace;font-style:italic;font-size:12px;color:#000;transform:scaleX(0.8333);transform-origin:0 0;">ReturnAsyncNotFutureStub_1530768</div>
<div class="a" style="left:22px;top:140px;width:16px;height:14px;background:linear-gradient(#10d8ff 0 3px,#787878 3px 4px,#f0f0f0 4px 13px,#787878 13px 14px);border-left:1px solid #787878;border-right:1px solid #787878"></div>
<div class="t" style="left:28px;top:142px;font-family:'Liberation Serif',serif;font-style:italic;font-weight:bold;font-size:12px;color:#222">f</div>
<div class="t" style="left:45px;top:142px;font-family:'Liberation Mono',monospace;font-style:italic;font-size:12px;color:#000;transform:scaleX(0.8333);transform-origin:0 0;">ReturnAsyncStub_1530794</div>
<div class="a" style="left:22px;top:154px;width:16px;height:14px;background:linear-gradient(#10d8ff 0 3px,#787878 3px 4px,#f0f0f0 4px 13px,#787878 13px 14px);border-left:1px solid #787878;border-right:1px solid #787878"></div>
<div class="t" style="left:28px;top:156px;font-family:'Liberation Serif',serif;font-style:italic;font-weight:bold;font-size:12px;color:#222">f</div>
<div class="t" style="left:45px;top:156px;font-family:'Liberation Mono',monospace;font-style:italic;font-size:12px;color:#000;transform:scaleX(0.8333);transform-origin:0 0;">ResumeStub_15307c0</div>
<div class="a" style="left:22px;top:168px;width:16px;height:14px;background:linear-gradient(#10d8ff 0 3px,#787878 3px 4px,#f0f0f0 4px 13px,#787878 13px 14px);border-left:1px solid #787878;border-right:1px solid #787878"></div>
<div class="t" style="left:28px;top:170px;font-family:'Liberation Serif',serif;font-style:italic;font-weight:bold;font-size:12px;color:#222">f</div>
<div class="t" style="left:45px;top:170px;font-family:'Liberation Mono',monospace;font-style:italic;font-size:12px;color:#000;transform:scaleX(0.8333);transform-origin:0 0;">AwaitWithTypeCheckStub_1530860</div>
<div class="a" style="left:22px;top:182px;width:16px;height:14px;background:linear-gradient(#10d8ff 0 3px,#787878 3px 4px,#f0f0f0 4px 13px,#787878 13px 14px);border-left:1px solid #787878;border-right:1px solid #787878"></div>
<div class="t" style="left:28px;top:184px;font-family:'Liberation Serif',serif;font-style:italic;font-weight:bold;font-size:12px;color:#222">f</div>
<div class="t" style="left:45px;top:184px;font-family:'Liberation Mono',monospace;font-style:italic;font-size:12px;color:#000;transform:scaleX(0.8333);transform-origin:0 0;">AwaitStub_15309f0</div>
<div class="a" style="left:22px;top:196px;width:16px;height:14px;background:linear-gradient(#10d8ff 0 3px,#787878 3px 4px,#f0f0f0 4px 13px,#787878 13px 14px);border-left:1px solid #787878;border-right:1px solid #787878"></div>
<div class="t" style="left:28px;top:198px;font-family:'Liberation Serif',serif;font-style:italic;font-weight:bold;font-size:12px;color:#222">f</div>
<div class="t" style="left:45px;top:198px;font-family:'Liberation Mono',monospace;font-style:italic;font-size:12px;color:#000;transform:scaleX(0.8333);transform-origin:0 0;">NoSuchMethodDispatcherStub_1530b78</div>
<div class="a" style="left:22px;top:210px;width:16px;height:14px;background:linear-gradient(#10d8ff 0 3px,#787878 3px 4px,#f0f0f0 4px 13px,#787878 13px 14px);border-left:1px solid #787878;border-right:1px solid #787878"></div>
<div class="t" style="left:28px;top:212px;font-family:'Liberation Serif',serif;font-style:italic;font-weight:bold;font-size:12px;color:#222">f</div>
<div class="t" style="left:45px;top:212px;font-family:'Liberation Mono',monospace;font-style:italic;font-size:12px;color:#000;transform:scaleX(0.8333);transform-origin:0 0;">InstantiateTypeArgumentsMayShareFunctionTAStub_1530c2c</div>
<div class="a" style="left:22px;top:224px;width:16px;height:14px;background:linear-gradient(#10d8ff 0 3px,#787878 3px 4px,#f0f0f0 4px 13px,#787878 13px 14px);border-left:1px solid #787878;border-right:1px solid #787878"></div>
<div class="t" style="left:28px;top:226px;font-family:'Liberation Serif',serif;font-style:italic;font-weight:bold;font-size:12px;color:#222">f</div>
<div class="t" style="left:45px;top:226px;font-family:'Liberation Mono',monospace;font-style:italic;font-size:12px;color:#000;transform:scaleX(0.8333);transform-origin:0 0;">InstantiateTypeArgumentsMayShareInstantiatorTAStub_1530d50</div>
<div class="a" style="left:22px;top:238px;width:16px;height:14px;background:linear-gradient(#10d8ff 0 3px,#787878 3px 4px,#f0f0f0 4px 13px,#787878 13px 14px);border-left:1px solid #787878;border-right:1px solid #787878"></div>
<div class="t" style="left:28px;top:240px;font-family:'Liberation Serif',serif;font-style:italic;font-weight:bold;font-size:12px;color:#222">f</div>
<div class="t" style="left:45px;top:240px;font-family:'Liberation Mono',monospace;font-style:italic;font-size:12px;color:#000;transform:scaleX(0.8333);transform-origin:0 0;">InstantiateTypeArgumentsStub_1530f10</div>
<div class="a" style="left:22px;top:252px;width:16px;height:14px;background:linear-gradient(#10d8ff 0 3px,#787878 3px 4px,#f0f0f0 4px 13px,#787878 13px 14px);border-left:1px solid #787878;border-right:1px solid #787878"></div>
<div class="t" style="left:28px;top:254px;font-family:'Liberation Serif',serif;font-style:italic;font-weight:bold;font-size:12px;color:#222">f</div>
<div class="t" style="left:45px;top:254px;font-family:'Liberation Mono',monospace;font-style:italic;font-size:12px;color:#000;transform:scaleX(0.8333);transform-origin:0 0;">InstantiateTypeNullableFunctionTypeParameterStub_1531058</div>
<div class="a" style="left:22px;top:266px;width:16px;height:14px;background:linear-gradient(#10d8ff 0 3px,#787878 3px 4px,#f0f0f0 4px 13px,#787878 13px 14px);border-left:1px solid #787878;border-right:1px solid #787878"></div>
<div class="t" style="left:28px;top:268px;font-family:'Liberation Serif',serif;font-style:italic;font-weight:bold;font-size:12px;color:#222">f</div>
<div class="t" style="left:45px;top:268px;font-family:'Liberation Mono',monospace;font-style:italic;font-size:12px;color:#000;transform:scaleX(0.8333);transform-origin:0 0;">sub_15310F8</div>
<div class="a" style="left:22px;top:280px;width:16px;height:14px;background:linear-gradient(#10d8ff 0 3px,#787878 3px 4px,#f0f0f0 4px 13px,#787878 13px 14px);border-left:1px solid #787878;border-right:1px solid #787878"></div>
<div class="t" style="left:28px;top:282px;font-family:'Liberation Serif',serif;font-style:italic;font-weight:bold;font-size:12px;color:#222">f</div>
<div class="t" style="left:45px;top:282px;font-family:'Liberation Mono',monospace;font-style:italic;font-size:12px;color:#000;transform:scaleX(0.8333);transform-origin:0 0;">InstantiateTypeNullableClassTypeParameterStub_1531130</div>
<div class="a" style="left:22px;top:294px;width:16px;height:14px;background:linear-gradient(#10d8ff 0 3px,#787878 3px 4px,#f0f0f0 4px 13px,#787878 13px 14px);border-left:1px solid #787878;border-right:1px solid #787878"></div>
<div class="t" style="left:28px;top:296px;font-family:'Liberation Serif',serif;font-style:italic;font-weight:bold;font-size:12px;color:#222">f</div>
<div class="t" style="left:45px;top:296px;font-family:'Liberation Mono',monospace;font-style:italic;font-size:12px;color:#000;transform:scaleX(0.8333);transform-origin:0 0;">sub_15311D0</div>
<div class="a" style="left:22px;top:308px;width:16px;height:14px;background:linear-gradient(#10d8ff 0 3px,#787878 3px 4px,#f0f0f0 4px 13px,#787878 13px 14px);border-left:1px solid #787878;border-right:1px solid #787878"></div>
<div class="t" style="left:28px;top:310px;font-family:'Liberation Serif',serif;font-style:italic;font-weight:bold;font-size:12px;color:#222">f</div>
<div class="t" style="left:45px;top:310px;font-family:'Liberation Mono',monospace;font-style:italic;font-size:12px;color:#000;transform:scaleX(0.8333);transform-origin:0 0;">InstantiateTypeStub_1531208</div>
<div class="a" style="left:22px;top:322px;width:16px;height:14px;background:linear-gradient(#10d8ff 0 3px,#787878 3px 4px,#f0f0f0 4px 13px,#787878 13px 14px);border-left:1px solid #787878;border-right:1px solid #787878"></div>
<div class="t" style="left:28px;top:324px;font-family:'Liberation Serif',serif;font-style:italic;font-weight:bold;font-size:12px;color:#222">f</div>
<div class="t" style="left:45px;top:324px;font-family:'Liberation Mono',monospace;font-style:italic;font-size:12px;color:#000;transform:scaleX(0.8333);transform-origin:0 0;">InstanceOfStub_1531240</div>
<div class="a" style="left:22px;top:336px;width:16px;height:14px;background:linear-gradient(#10d8ff 0 3px,#787878 3px 4px,#f0f0f0 4px 13px,#787878 13px 14px);border-left:1px solid #787878;border-right:1px solid #787878"></div>
<div class="t" style="left:28px;top:338px;font-family:'Liberation Serif',serif;font-style:italic;font-weight:bold;font-size:12px;color:#222">f</div>
<div class="t" style="left:45px;top:338px;font-family:'Liberation Mono',monospace;font-style:italic;font-size:12px;color:#000;transform:scaleX(0.8333);transform-origin:0 0;">ReThrowStub_153127c</div>
<div class="a" style="left:22px;top:350px;width:16px;height:14px;background:linear-gradient(#10d8ff 0 3px,#787878 3px 4px,#f0f0f0 4px 13px,#787878 13px 14px);border-left:1px solid #787878;border-right:1px solid #787878"></div>
<div class="t" style="left:28px;top:352px;font-family:'Liberation Serif',serif;font-style:italic;font-weight:bold;font-size:12px;color:#222">f</div>
<div class="t" style="left:45px;top:352px;font-family:'Liberation Mono',monospace;font-style:italic;font-size:12px;color:#000;transform:scaleX(0.8333);transform-origin:0 0;">InitLateFinalInstanceFieldStub_1531370</div>
<div class="a" style="left:22px;top:364px;width:16px;height:14px;background:linear-gradient(#10d8ff 0 3px,#787878 3px 4px,#f0f0f0 4px 13px,#787878 13px 14px);border-left:1px solid #787878;border-right:1px solid #787878"></div>
<div class="t" style="left:28px;top:366px;font-family:'Liberation Serif',serif;font-style:italic;font-weight:bold;font-size:12px;color:#222">f</div>
<div class="t" style="left:45px;top:366px;font-family:'Liberation Mono',monospace;font-style:italic;font-size:12px;color:#000;transform:scaleX(0.8333);transform-origin:0 0;">InitInstanceFieldStub_1531480</div>
<div class="a" style="left:22px;top:378px;width:16px;height:14px;background:linear-gradient(#10d8ff 0 3px,#787878 3px 4px,#f0f0f0 4px 13px,#787878 13px 14px);border-left:1px solid #787878;border-right:1px solid #787878"></div>
<div class="t" style="left:28px;top:380px;font-family:'Liberation Serif',serif;font-style:italic;font-weight:bold;font-size:12px;color:#222">f</div>
<div class="t" style="left:45px;top:380px;font-family:'Liberation Mono',monospace;font-style:italic;font-size:12px;color:#000;transform:scaleX(0.8333);transform-origin:0 0;">InitLateFinalStaticFieldStub_15314b4</div>
<div class="a" style="left:22px;top:392px;width:16px;height:14px;background:linear-gradient(#10d8ff 0 3px,#787878 3px 4px,#f0f0f0 4px 13px,#787878 13px 14px);border-left:1px solid #787878;border-right:1px solid #787878"></div>
<div class="t" style="left:28px;top:394px;font-family:'Liberation Serif',serif;font-style:italic;font-weight:bold;font-size:12px;color:#222">f</div>
<div class="t" style="left:45px;top:394px;font-family:'Liberation Mono',monospace;font-style:italic;font-size:12px;color:#000;transform:scaleX(0.8333);transform-origin:0 0;">InitStaticFieldStub_1531558</div>
<div class="a" style="left:22px;top:406px;width:16px;height:14px;background:linear-gradient(#10d8ff 0 3px,#787878 3px 4px,#f0f0f0 4px 13px,#787878 13px 14px);border-left:1px solid #787878;border-right:1px solid #787878"></div>
<div class="t" style="left:28px;top:408px;font-family:'Liberation Serif',serif;font-style:italic;font-weight:bold;font-size:12px;color:#222">f</div>
<div class="t" style="left:45px;top:408px;font-family:'Liberation Mono',monospace;font-style:italic;font-size:12px;color:#000;transform:scaleX(0.8333);transform-origin:0 0;">PfiCallbackTrampolineStub_153158c</div>
<div class="a" style="left:22px;top:420px;width:16px;height:14px;background:linear-gradient(#10d8ff 0 3px,#787878 3px 4px,#f0f0f0 4px 13px,#787878 13px 14px);border-left:1px solid #787878;border-right:1px solid #787878"></div>
<div class="t" style="left:28px;top:422px;font-family:'Liberation Serif',serif;font-style:italic;font-weight:bold;font-size:12px;color:#222">f</div>
<div class="t" style="left:45px;top:422px;font-family:'Liberation Mono',monospace;font-style:italic;font-size:12px;color:#000;transform:scaleX(0.8333);transform-origin:0 0;">sub_1531594</div>
<div class="a" style="left:22px;top:434px;width:16px;height:14px;background:linear-gradient(#10d8ff 0 3px,#787878 3px 4px,#f0f0f0 4px 13px,#787878 13px 14px);border-left:1px solid #787878;border-right:1px solid #787878"></div>
<div class="t" style="left:28px;top:436px;font-family:'Liberation Serif',serif;font-style:italic;font-weight:bold;font-size:12px;color:#222">f</div>
<div class="t" style="left:45px;top:436px;font-family:'Liberation Mono',monospace;font-style:italic;font-size:12px;color:#000;transform:scaleX(0.8333);transform-origin:0 0;">sub_153159C</div>
<div class="a" style="left:22px;top:448px;width:16px;height:14px;background:linear-gradient(#10d8ff 0 3px,#787878 3px 4px,#f0f0f0 4px 13px,#787878 13px 14px);border-left:1px solid #787878;border-right:1px solid #787878"></div>
<div class="t" style="left:28px;top:450px;font-family:'Liberation Serif',serif;font-style:italic;font-weight:bold;font-size:12px;color:#222">f</div>
<div class="t" style="left:45px;top:450px;font-family:'Liberation Mono',monospace;font-style:italic;font-size:12px;color:#000;transform:scaleX(0.8333);transform-origin:0 0;">sub_15315A4</div>
<div class="a" style="left:22px;top:462px;width:16px;height:14px;background:linear-gradient(#10d8ff 0 3px,#787878 3px 4px,#f0f0f0 4px 13px,#787878 13px 14px);border-left:1px solid #787878;border-right:1px solid #787878"></div>
<div class="t" style="left:28px;top:464px;font-family:'Liberation Serif',serif;font-style:italic;font-weight:bold;font-size:12px;color:#222">f</div>
<div class="t" style="left:45px;top:464px;font-family:'Liberation Mono',monospace;font-style:italic;font-size:12px;color:#000;transform:scaleX(0.8333);transform-origin:0 0;">sub_15315AC</div>
<div class="a" style="left:22px;top:476px;width:16px;height:14px;background:linear-gradient(#10d8ff 0 3px,#787878 3px 4px,#f0f0f0 4px 13px,#787878 13px 14px);border-left:1px solid #787878;border-right:1px solid #787878"></div>
<div class="t" style="left:28px;top:478px;font-family:'Liberation Serif',serif;font-style:italic;font-weight:bold;font-size:12px;color:#222">f</div>
<div class="t" style="left:45px;top:478px;font-family:'Liberation Mono',monospace;font-style:italic;font-size:12px;color:#000;transform:scaleX(0.8333);transform-origin:0 0;">sub_15315B4</div>
<div class="a" style="left:22px;top:490px;width:16px;height:14px;background:linear-gradient(#10d8ff 0 3px,#787878 3px 4px,#f0f0f0 4px 13px,#787878 13px 14px);border-left:1px solid #787878;border-right:1px solid #787878"></div>
<div class="t" style="left:28px;top:492px;font-family:'Liberation Serif',serif;font-style:italic;font-weight:bold;font-size:12px;color:#222">f</div>
<div class="t" style="left:45px;top:492px;font-family:'Liberation Mono',monospace;font-style:italic;font-size:12px;color:#000;transform:scaleX(0.8333);transform-origin:0 0;">sub_15315BC</div>
<div class="a" style="left:22px;top:504px;width:16px;height:14px;background:linear-gradient(#10d8ff 0 3px,#787878 3px 4px,#f0f0f0 4px 13px,#787878 13px 14px);border-left:1px solid #787878;border-right:1px solid #787878"></div>
<div class="t" style="left:28px;top:506px;font-family:'Liberation Serif',serif;font-style:italic;font-weight:bold;font-size:12px;color:#222">f</div>
<div class="t" style="left:45px;top:506px;font-family:'Liberation Mono',monospace;font-style:italic;font-size:12px;color:#000;transform:scaleX(0.8333);transform-origin:0 0;">sub_15315C4</div>
<div class="a" style="left:22px;top:518px;width:16px;height:14px;background:linear-gradient(#10d8ff 0 3px,#787878 3px 4px,#f0f0f0 4px 13px,#787878 13px 14px);border-left:1px solid #787878;border-right:1px solid #787878"></div>
<div class="t" style="left:28px;top:520px;font-family:'Liberation Serif',serif;font-style:italic;font-weight:bold;font-size:12px;color:#222">f</div>
<div class="t" style="left:45px;top:520px;font-family:'Liberation Mono',monospace;font-style:italic;font-size:12px;color:#000;transform:scaleX(0.8333);transform-origin:0 0;">sub_15315CC</div>
<div class="a" style="left:22px;top:532px;width:16px;height:14px;background:linear-gradient(#10d8ff 0 3px,#787878 3px 4px,#f0f0f0 4px 13px,#787878 13px 14px);border-left:1px solid #787878;border-right:1px solid #787878"></div>
<div class="t" style="left:28px;top:534px;font-family:'Liberation Serif',serif;font-style:italic;font-weight:bold;font-size:12px;color:#222">f</div>
<div class="t" style="left:45px;top:534px;font-family:'Liberation Mono',monospace;font-style:italic;font-size:12px;color:#000;transform:scaleX(0.8333);transform-origin:0 0;">sub_15315D4</div>
<div class="a" style="left:22px;top:546px;width:16px;height:14px;background:linear-gradient(#10d8ff 0 3px,#787878 3px 4px,#f0f0f0 4px 13px,#787878 13px 14px);border-left:1px solid #787878;border-right:1px solid #787878"></div>
<div class="t" style="left:28px;top:548px;font-family:'Liberation Serif',serif;font-style:italic;font-weight:bold;font-size:12px;color:#222">f</div>
<div class="t" style="left:45px;top:548px;font-family:'Liberation Mono',monospace;font-style:italic;font-size:12px;color:#000;transform:scaleX(0.8333);transform-origin:0 0;">sub_15315DC</div>
<div class="a" style="left:22px;top:560px;width:16px;height:14px;background:linear-gradient(#10d8ff 0 3px,#787878 3px 4px,#f0f0f0 4px 13px,#787878 13px 14px);border-left:1px solid #787878;border-right:1px solid #787878"></div>
<div class="t" style="left:28px;top:562px;font-family:'Liberation Serif',serif;font-style:italic;font-weight:bold;font-size:12px;color:#222">f</div>
<div class="t" style="left:45px;top:562px;font-family:'Liberation Mono',monospace;font-style:italic;font-size:12px;color:#000;transform:scaleX(0.8333);transform-origin:0 0;">sub_15315E4</div>
<div class="a" style="left:22px;top:574px;width:16px;height:14px;background:linear-gradient(#10d8ff 0 3px,#787878 3px 4px,#f0f0f0 4px 13px,#787878 13px 14px);border-left:1px solid #787878;border-right:1px solid #787878"></div>
<div class="t" style="left:28px;top:576px;font-family:'Liberation Serif',serif;font-style:italic;font-weight:bold;font-size:12px;color:#222">f</div>
<div class="t" style="left:45px;top:576px;font-family:'Liberation Mono',monospace;font-style:italic;font-size:12px;color:#000;transform:scaleX(0.8333);transform-origin:0 0;">sub_15315EC</div>
<div class="a" style="left:22px;top:588px;width:16px;height:14px;background:linear-gradient(#10d8ff 0 3px,#787878 3px 4px,#f0f0f0 4px 13px,#787878 13px 14px);border-left:1px solid #787878;border-right:1px solid #787878"></div>
<div class="t" style="left:28px;top:590px;font-family:'Liberation Serif',serif;font-style:italic;font-weight:bold;font-size:12px;color:#222">f</div>
<div class="t" style="left:45px;top:590px;font-family:'Liberation Mono',monospace;font-style:italic;font-size:12px;color:#000;transform:scaleX(0.8333);transform-origin:0 0;">sub_15315F4</div>
<div class="a" style="left:22px;top:602px;width:16px;height:14px;background:linear-gradient(#10d8ff 0 3px,#787878 3px 4px,#f0f0f0 4px 13px,#787878 13px 14px);border-left:1px solid #787878;border-right:1px solid #787878"></div>
<div class="t" style="left:28px;top:604px;font-family:'Liberation Serif',serif;font-style:italic;font-weight:bold;font-size:12px;color:#222">f</div>
<div class="t" style="left:45px;top:604px;font-family:'Liberation Mono',monospace;font-style:italic;font-size:12px;color:#000;transform:scaleX(0.8333);transform-origin:0 0;">sub_15315FC</div>
<div class="a" style="left:22px;top:616px;width:16px;height:14px;background:linear-gradient(#10d8ff 0 3px,#787878 3px 4px,#f0f0f0 4px 13px,#787878 13px 14px);border-left:1px solid #787878;border-right:1px solid #787878"></div>
<div class="t" style="left:28px;top:618px;font-family:'Liberation Serif',serif;font-style:italic;font-weight:bold;font-size:12px;color:#222">f</div>
<div class="t" style="left:45px;top:618px;font-family:'Liberation Mono',monospace;font-style:italic;font-size:12px;color:#000;transform:scaleX(0.8333);transform-origin:0 0;">sub_1531604</div>
<div class="a" style="left:22px;top:630px;width:16px;height:14px;background:linear-gradient(#10d8ff 0 3px,#787878 3px 4px,#f0f0f0 4px 13px,#787878 13px 14px);border-left:1px solid #787878;border-right:1px solid #787878"></div>
<div class="t" style="left:28px;top:632px;font-family:'Liberation Serif',serif;font-style:italic;font-weight:bold;font-size:12px;color:#222">f</div>
<div class="t" style="left:45px;top:632px;font-family:'Liberation Mono',monospace;font-style:italic;font-size:12px;color:#000;transform:scaleX(0.8333);transform-origin:0 0;">sub_153160C</div>
<div class="a" style="left:22px;top:644px;width:16px;height:14px;background:linear-gradient(#10d8ff 0 3px,#787878 3px 4px,#f0f0f0 4px 13px,#787878 13px 14px);border-left:1px solid #787878;border-right:1px solid #787878"></div>
<div class="t" style="left:28px;top:646px;font-family:'Liberation Serif',serif;font-style:italic;font-weight:bold;font-size:12px;color:#222">f</div>
<div class="t" style="left:45px;top:646px;font-family:'Liberation Mono',monospace;font-style:italic;font-size:12px;color:#000;transform:scaleX(0.8333);transform-origin:0 0;">sub_1531614</div>
<div class="a" style="left:22px;top:658px;width:16px;height:14px;background:linear-gradient(#10d8ff 0 3px,#787878 3px 4px,#f0f0f0 4px 13px,#787878 13px 14px);border-left:1px solid #787878;border-right:1px solid #787878"></div>
<div class="t" style="left:28px;top:660px;font-family:'Liberation Serif',serif;font-style:italic;font-weight:bold;font-size:12px;color:#222">f</div>
<div class="t" style="left:45px;top:660px;font-family:'Liberation Mono',monospace;font-style:italic;font-size:12px;color:#000;transform:scaleX(0.8333);transform-origin:0 0;">sub_153161C</div>
<div class="a" style="left:22px;top:672px;width:16px;height:14px;background:linear-gradient(#10d8ff 0 3px,#787878 3px 4px,#f0f0f0 4px 13px,#787878 13px 14px);border-left:1px solid #787878;border-right:1px solid #787878"></div>
<div class="t" style="left:28px;top:674px;font-family:'Liberation Serif',serif;font-style:italic;font-weight:bold;font-size:12px;color:#222">f</div>
<div class="t" style="left:45px;top:674px;font-family:'Liberation Mono',monospace;font-style:italic;font-size:12px;color:#000;transform:scaleX(0.8333);transform-origin:0 0;">sub_1531624</div>
<div class="a" style="left:22px;top:686px;width:16px;height:14px;background:linear-gradient(#10d8ff 0 3px,#787878 3px 4px,#f0f0f0 4px 13px,#787878 13px 14px);border-left:1px solid #787878;border-right:1px solid #787878"></div>
<div class="t" style="left:28px;top:688px;font-family:'Liberation Serif',serif;font-style:italic;font-weight:bold;font-size:12px;color:#222">f</div>
<div class="t" style="left:45px;top:688px;font-family:'Liberation Mono',monospace;font-style:italic;font-size:12px;color:#000;transform:scaleX(0.8333);transform-origin:0 0;">sub_153162C</div>
<div class="a" style="left:22px;top:700px;width:16px;height:14px;background:linear-gradient(#10d8ff 0 3px,#787878 3px 4px,#f0f0f0 4px 13px,#787878 13px 14px);border-left:1px solid #787878;border-right:1px solid #787878"></div>
<div class="t" style="left:28px;top:702px;font-family:'Liberation Serif',serif;font-style:italic;font-weight:bold;font-size:12px;color:#222">f</div>
<div class="t" style="left:45px;top:702px;font-family:'Liberation Mono',monospace;font-style:italic;font-size:12px;color:#000;transform:scaleX(0.8333);transform-origin:0 0;">sub_1531634</div>
<div class="a" style="left:22px;top:714px;width:16px;height:14px;background:linear-gradient(#10d8ff 0 3px,#787878 3px 4px,#f0f0f0 4px 13px,#787878 13px 14px);border-left:1px solid #787878;border-right:1px solid #787878"></div>
<div class="t" style="left:28px;top:716px;font-family:'Liberation Serif',serif;font-style:italic;font-weight:bold;font-size:12px;color:#222">f</div>
<div class="t" style="left:45px;top:716px;font-family:'Liberation Mono',monospace;font-style:italic;font-size:12px;color:#000;transform:scaleX(0.8333);transform-origin:0 0;">sub_153163C</div>
<div class="a" style="left:22px;top:728px;width:16px;height:14px;background:linear-gradient(#10d8ff 0 3px,#787878 3px 4px,#f0f0f0 4px 13px,#787878 13px 14px);border-left:1px solid #787878;border-right:1px solid #787878"></div>
<div class="t" style="left:28px;top:730px;font-family:'Liberation Serif',serif;font-style:italic;font-weight:bold;font-size:12px;color:#222">f</div>
<div class="t" style="left:45px;top:730px;font-family:'Liberation Mono',monospace;font-style:italic;font-size:12px;color:#000;transform:scaleX(0.8333);transform-origin:0 0;">sub_1531644</div>
</div>
<div class="a" style="left:14px;top:928px;width:84px;height:2px;background:#a0a0a0;border-radius:1px"></div>
<div class="a" style="left:24px;top:937px;width:323px;height:19px;background:#fff;border-bottom:1px solid #808080"></div>
<svg class="a" style="left:3px;top:941px;" width="13" height="12" viewBox="0 0 13 12"><path d="M1.5 1.5L11.5 10.5M11.5 1.5L1.5 10.5" stroke="#1a8fe0" stroke-width="3.2"/></svg>
<div class="t" style="left:6px;top:962px;font-size:13px;color:#000;width:303px;overflow:hidden;line-height:16px">Line 100052 of 120060, /bbcore$src$xhr_RequestSig</div>
<div class="a" style="left:322px;top:959px;width:25px;height:20px;background:#fff;border:1px solid #d0d0d0;border-radius:3px"></div>
<svg class="a" style="left:327px;top:962px;" width="15" height="14" viewBox="0 0 15 14"><path d="M12.5 6A5.5 5.5 0 0 0 2.8 3.8" stroke="#333" stroke-width="1.5" fill="none"/><path d="M2.5 8A5.5 5.5 0 0 0 12.2 10.2" stroke="#333" stroke-width="1.5" fill="none"/><path d="M9.5 1.5L14 1.5L13 6Z" fill="#333"/><path d="M5.5 12.5L1 12.5L2 8Z" fill="#333"/></svg>
<div class="a" style="left:0px;top:985px;width:1919px;height:1px;background:#808890"></div>
<div class="a" style="left:0px;top:1014px;width:1919px;height:1px;background:#8a8f96"></div>
<div class="t" style="left:26px;top:993px;font-size:13px;color:#000">Output</div>
<svg class="a" style="left:4px;top:991px;" width="16" height="16" viewBox="0 0 16 16"><rect x="0.5" y="0.5" width="15" height="15" rx="2" fill="#f4f4f4" stroke="#707070"/><rect x="1" y="1" width="14" height="2.5" fill="#10d8ff"/><rect x="3" y="5" width="10" height="9" rx="1" fill="#d8d8d8"/><circle cx="5" cy="6.5" r="0.9" fill="#1a80d0"/><circle cx="5" cy="8.5" r="0.9" fill="#1a80d0"/><circle cx="5" cy="10.5" r="0.9" fill="#1a80d0"/><circle cx="5" cy="12.5" r="0.9" fill="#1a80d0"/><path d="M7 6.5h4.5M7 8.5h4.5M7 10.5h4.5M7 12.5h4.5" stroke="#222" stroke-width="1"/></svg>
<svg class="a" style="left:1849px;top:996px;" width="11" height="10" viewBox="0 0 11 10"><rect x="0.6" y="0.6" width="9.8" height="8.8" fill="#fff" stroke="#333" stroke-width="1.2"/><rect x="0" y="0" width="11" height="2.2" fill="#333"/></svg>
<svg class="a" style="left:1876px;top:996px;" width="9" height="9" viewBox="0 0 9 9"><rect x="3" y="0.6" width="5.4" height="4.5" fill="#f0f0f0" stroke="#222" stroke-width="1.1"/><rect x="0.6" y="3.2" width="5.4" height="5.2" fill="#f0f0f0" stroke="#222" stroke-width="1.1"/></svg>
<svg class="a" style="left:1902px;top:997px;" width="8" height="8" viewBox="0 0 8 8"><path d="M0.8 0.8L7.2 7.2M7.2 0.8L0.8 7.2" stroke="#222" stroke-width="1.6"/></svg>
<div class="a" style="left:0px;top:1017px;width:1903px;height:18px;background:#fff"></div>
<div class="a" style="left:0px;top:1035px;width:1919px;height:1px;background:#808080"></div>
<div class="t" style="left:8px;top:1023px;font-family:'Liberation Mono',monospace;font-size:11.67px;color:#000">[MCP] &lt;&lt; tools/list (2.2ms) {&quot;tools&quot;: [{&quot;name&quot;: &quot;lookup_funcs&quot;, &quot;description&quot;: &quot;Get functions by address or name (auto-detects)&quot;, &quot;inputSchema&quot;: {&quot;type&quot;: &quot;object&quot;, &quot;properties&quot;: {&quot;queries&quot;: {&quot;anyOf&quot;: [{&quot;type&quot;: &quot;array&quot;, &quot;items&quot;: ...</div>
<div class="a" style="left:3px;top:1039px;width:61px;height:20px;background:#fafafa;border:1px solid #d8d8d8;border-radius:4px"></div>
<div class="t" style="left:14px;top:1042px;font-size:13px;color:#000">Python</div>
<div class="a" style="left:69px;top:1039px;width:1849px;height:19px;background:#fff;border-bottom:1px solid #808080"></div>
<div class="t" style="left:2px;top:1065px;font-family:'Liberation Mono',monospace;font-size:11.67px;color:#000">AU:  idle</div>
<div class="a" style="left:80px;top:1063px;width:1px;height:15px;background:#c8c8c8"></div>
<div class="t" style="left:86px;top:1065px;font-family:'Liberation Mono',monospace;font-size:11.67px;color:#000">Down</div>
<div class="a" style="left:156px;top:1063px;width:1px;height:15px;background:#c8c8c8"></div>
<div class="t" style="left:161px;top:1065px;font-family:'Liberation Mono',monospace;font-size:11.67px;color:#000">Disk: 58GB</div>
<div class="a" style="left:232px;top:1063px;width:1px;height:15px;background:#c8c8c8"></div>
</div></body></html>
